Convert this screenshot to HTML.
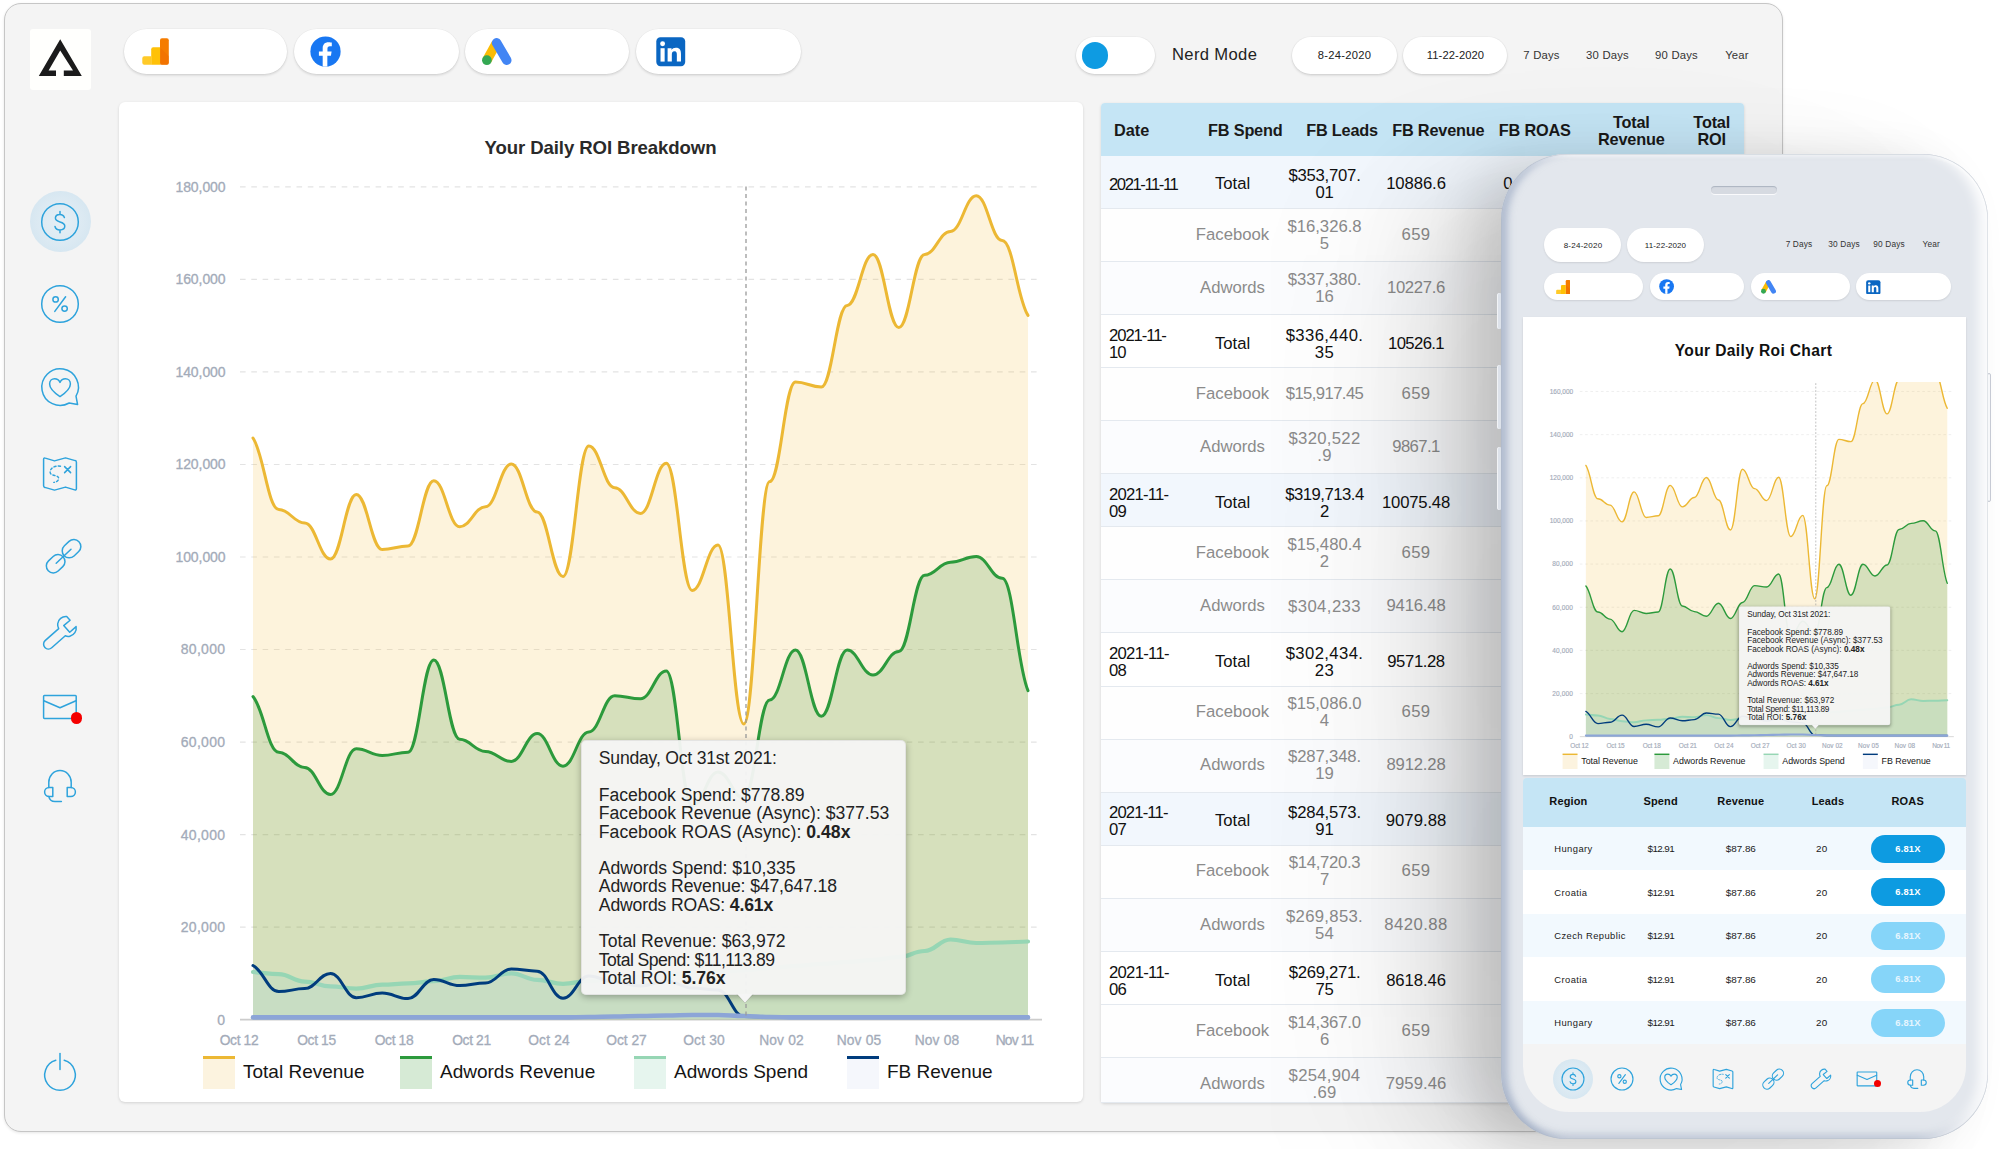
<!DOCTYPE html><html lang="en"><head><meta charset="utf-8"><title>Daily ROI Dashboard</title><style>

html,body{margin:0;padding:0;background:#fff}
body{width:2000px;height:1149px;position:relative;overflow:hidden;font-family:"Liberation Sans", sans-serif;color:#1a1a1a;-webkit-font-smoothing:antialiased}
.t{position:absolute;white-space:nowrap;margin:0;padding:0}
.b{position:absolute;display:block}
.csvg{position:absolute;left:0;top:0;overflow:visible}
b{font-weight:700}
.tip{position:absolute;background:rgba(245,245,245,0.955);border:1px solid rgba(0,0,0,0.07);border-radius:5px;box-shadow:0 2px 7px rgba(0,0,0,0.30);box-sizing:border-box}
.pill{position:absolute;background:#fff;border-radius:30px;box-shadow:0 1.5px 2.5px rgba(0,0,0,0.13),0 0 0 0.6px rgba(0,0,0,0.04)}
.card{position:absolute;background:#fff;border-radius:4px;box-shadow:0 1px 3px rgba(0,0,0,0.14)}
.ico{position:absolute;display:block}

</style></head><body>
<div class="b" style="left:4px;top:3px;width:1777px;height:1127px;background:#f4f4f4;border:1px solid #c6c6c6;border-radius:17px;box-shadow:0 1px 3px rgba(0,0,0,0.10)"></div>
<div class="b" style="left:30.0px;top:29.0px;width:60.5px;height:61.0px;background:#fffffd;border-radius:3px;"></div>
<svg class="b" style="left:30px;top:29px" width="61" height="61" viewBox="0 0 61 61"><path d="M30.2,10.2L51.8,47H33.8V41.4H43L30.2,21.6L18.6,41.4H26V47H8.8Z" fill="#1b1b1b"/></svg>
<div class="pill" style="left:124px;top:28.8px;width:163px;height:45.6px"></div>
<div class="b" style="left:142.2px;top:37.6px"><svg width="27" height="27" viewBox="0 0 27 27"><rect x="18" y="0.2" width="8.8" height="26.6" rx="2" fill="#f57c00"/><path d="M18,9.400L26.800,18.200V24.800a2,2 0 0 1 -2,2H18Z" fill="#ef6c00" opacity="0.55"/><path d="M9.200,26.800V11.200a2,2 0 0 1 2,-2H18.100V26.800Z" fill="#ffc107"/><path d="M0.300,20.200a2,2 0 0 1 2,-2H9.300V26.800H2.300a2,2 0 0 1 -2,-2Z" fill="#ffca28"/></svg></div>
<div class="pill" style="left:294px;top:28.8px;width:165px;height:45.6px"></div>
<div class="b" style="left:309.5px;top:36.0px"><svg width="31" height="31" viewBox="0 0 32 32"><circle cx="16" cy="16" r="15.6" fill="#1877f2"/><path d="M21.6,20.4l0.7,-4.5h-4.3v-2.9c0,-1.2 0.6,-2.4 2.5,-2.4h2v-3.8c0,0 -1.8,-0.3 -3.5,-0.3c-3.6,0 -5.9,2.2 -5.9,6.1v3.4h-3.9v4.5h3.9v10.8c0.8,0.1 1.6,0.2 2.4,0.2s1.600,-0.1 2.4,-0.2v-10.800z" fill="#fff"/></svg></div>
<div class="pill" style="left:465px;top:28.8px;width:164px;height:45.6px"></div>
<div class="b" style="left:482.2px;top:37.5px"><svg width="30" height="30" viewBox="0 0 30 30"><path d="M14.300,5.200L4.900,22.200" stroke="#fbbc04" stroke-width="9.600" stroke-linecap="butt" fill="none"/><path d="M14.600,4.900L24.700,22.200" stroke="#4285f4" stroke-width="9.600" stroke-linecap="round" fill="none"/><circle cx="4.900" cy="22.200" r="4.850" fill="#34a853"/></svg></div>
<div class="pill" style="left:636px;top:28.8px;width:165px;height:45.6px"></div>
<div class="b" style="left:656.0px;top:37.0px"><svg width="29.5" height="29.5" viewBox="0 0 30 30"><rect x="0.3" y="0.3" width="29.4" height="29.4" rx="4.2" fill="#0a66c2"/><rect x="4.6" y="11.4" width="4.2" height="13.6" fill="#fff"/><circle cx="6.7" cy="6.9" r="2.5" fill="#fff"/><path d="M11.8,11.4h4v1.9c0.8,-1.4 2.4,-2.3 4.4,-2.3c4.2,0 5.2,2.7 5.2,6.300v7.700h-4.200v-6.800c0,-1.700 -0.100,-3.700 -2.400,-3.700c-2.300,0 -2.700,1.800 -2.700,3.600v6.900h-4.300z" fill="#fff"/></svg></div>
<div class="pill" style="left:1076px;top:37.2px;width:79px;height:36.4px"></div>
<div class="b" style="left:1082.0px;top:42.2px;width:26.4px;height:26.4px;background:#0e9be2;border-radius:50%;"></div>
<div class="t" style="left:1172.0px;top:44.5px;width:600px;text-align:left;font-size:16.6px;line-height:19.9px;font-weight:400;color:#222;letter-spacing:0.35px;">Nerd Mode</div>
<div class="pill" style="left:1292px;top:37.2px;width:105px;height:36.4px"></div>
<div class="pill" style="left:1403px;top:37.2px;width:104px;height:36.4px"></div>
<div class="t" style="left:1044.5px;top:48.8px;width:600px;text-align:center;font-size:11.2px;line-height:13.4px;font-weight:400;color:#222;letter-spacing:0.30px;">8-24-2020</div>
<div class="t" style="left:1155.5px;top:48.8px;width:600px;text-align:center;font-size:11.2px;line-height:13.4px;font-weight:400;color:#222;letter-spacing:0.10px;">11-22-2020</div>
<div class="t" style="left:1241.5px;top:48.7px;width:600px;text-align:center;font-size:11.3px;line-height:13.6px;font-weight:400;color:#333;letter-spacing:0.20px;">7 Days</div>
<div class="t" style="left:1307.5px;top:48.7px;width:600px;text-align:center;font-size:11.3px;line-height:13.6px;font-weight:400;color:#333;letter-spacing:0.20px;">30 Days</div>
<div class="t" style="left:1376.5px;top:48.7px;width:600px;text-align:center;font-size:11.3px;line-height:13.6px;font-weight:400;color:#333;letter-spacing:0.20px;">90 Days</div>
<div class="t" style="left:1437.0px;top:48.7px;width:600px;text-align:center;font-size:11.3px;line-height:13.6px;font-weight:400;color:#333;letter-spacing:0.20px;">Year</div>
<div class="b" style="left:29.5px;top:191.0px;width:61.0px;height:61.0px;border-radius:50%;background:radial-gradient(circle,#e6eff5 0%,#dbe9f2 55%,#cfe3ef 100%);"></div>
<div class="ico" style="left:40px;top:202.1px"><svg width="40" height="40" viewBox="0 0 40 40" fill="none" stroke="#2ea3dc" stroke-width="1.5" stroke-linecap="round" stroke-linejoin="round" style="overflow:visible"><circle cx="20" cy="20" r="18.3"/><path d="M24.4,15.6c-0.6,-2.1 -2.3,-3.2 -4.5,-3.2c-2.7,0 -4.5,1.5 -4.5,3.7c0,2.3 1.8,3.1 4.6,3.8c3,0.8 4.8,1.8 4.8,4.2c0,2.4 -2,3.9 -4.8,3.9c-2.7,0 -4.5,-1.3 -5,-3.5M20,9.6v2.8M20,28v2.8"/></svg></div>
<div class="ico" style="left:40px;top:284.2px"><svg width="40" height="40" viewBox="0 0 40 40" fill="none" stroke="#2ea3dc" stroke-width="1.5" stroke-linecap="round" stroke-linejoin="round" style="overflow:visible"><circle cx="20" cy="20" r="18.3"/><circle cx="15.6" cy="15.4" r="2.7"/><circle cx="24.6" cy="24.6" r="2.7"/><path d="M25.6,12.8L14.8,27.4"/></svg></div>
<div class="ico" style="left:40px;top:366.5px"><svg width="40" height="40" viewBox="0 0 40 40" fill="none" stroke="#2ea3dc" stroke-width="1.5" stroke-linecap="round" stroke-linejoin="round" style="overflow:visible"><path d="M36,29.2L37.6,37.6L29.2,36A18.3,18.3 0 1 1 36,29.2Z"/><path d="M20,29.6C12.5,24.6 9.6,20.6 9.6,17C9.6,13.6 12,11.8 14.6,11.8C17,11.8 19,13.2 20,15.4C21,13.2 23,11.8 25.4,11.8C28,11.8 30.4,13.6 30.4,17C30.4,20.6 27.5,24.6 20,29.6Z"/></svg></div>
<div class="ico" style="left:40px;top:453.5px"><svg width="40" height="40" viewBox="0 0 40 40" fill="none" stroke="#2ea3dc" stroke-width="1.5" stroke-linecap="round" stroke-linejoin="round" style="overflow:visible"><path d="M3.6,5.2C3.6,4.2 4.4,3.8 5.3,4.1L14.5,6.9L25.5,3.9L35.2,6.6C36,6.8 36.4,7.4 36.4,8.2V34.8C36.4,35.8 35.6,36.2 34.7,35.9L25.5,33.1L14.5,36.1L4.8,33.4C4,33.2 3.6,32.6 3.6,31.8Z"/><path d="M20.5,12.2C14.5,11.2 9.5,14.6 10.2,18.6C11,22.6 19.5,20.5 18.6,25C18.2,27 16,28.2 13.8,28.4" stroke-dasharray="2.2 2.2" stroke-width="1.4"/><path d="M24.6,12.6L30.6,18.6M30.6,12.6L24.6,18.6"/></svg></div>
<div class="ico" style="left:40px;top:536.2px"><svg width="40" height="40" viewBox="0 0 40 40" fill="none" stroke="#2ea3dc" stroke-width="1.5" stroke-linecap="round" stroke-linejoin="round" style="overflow:visible"><g transform="translate(3.6,0.2) rotate(-43.5 20 20)"><rect x="-1.15" y="13" width="20.4" height="14" rx="7"/><rect x="20.75" y="13" width="20.4" height="14" rx="7"/><path d="M9.800,20H30.200"/></g></svg></div>
<div class="ico" style="left:40px;top:613.2px"><svg width="40" height="40" viewBox="0 0 40 40" fill="none" stroke="#2ea3dc" stroke-width="1.5" stroke-linecap="round" stroke-linejoin="round" style="overflow:visible"><path d="M26.2,3.6C21.6,3.2 17.6,6.4 17.2,10.8C17,12.6 17.4,14.2 18.2,15.6L4.6,27.6C2.6,29.4 2.6,32.4 4.4,34.4C6.2,36.4 9.2,36.6 11.2,34.8L24.8,22.8C26.2,23.4 27.8,23.6 29.4,23.2C33.6,22.2 36.4,18 35.6,13.6L29.2,19.2L23.2,12.6L29.6,7.2Z" transform="translate(0.5,0)"/></svg></div>
<div class="ico" style="left:40px;top:687.0px"><svg width="40" height="40" viewBox="0 0 40 40" fill="none" stroke="#2ea3dc" stroke-width="1.5" stroke-linecap="round" stroke-linejoin="round" style="overflow:visible"><rect x="3.6" y="8.4" width="32.6" height="23" rx="0.8"/><path d="M3.8,13.8L20,20.8L36,13.8"/></svg></div>
<div class="ico" style="left:40px;top:766.0px"><svg width="40" height="40" viewBox="0 0 40 40" fill="none" stroke="#2ea3dc" stroke-width="1.5" stroke-linecap="round" stroke-linejoin="round" style="overflow:visible"><path d="M8.8,21.6V16.2C8.8,9.800 13.700,4.600 20,4.600C26.300,4.600 31.200,9.800 31.200,16.200V21.600"/><path d="M12.8,21.6V30.4H9.2C6.6,30.4 4.6,28.4 4.6,26C4.6,23.6 6.6,21.6 9.2,21.6Z"/><path d="M27.2,21.6V30.4H30.8C33.4,30.4 35.4,28.4 35.4,26C35.4,23.6 33.4,21.6 30.8,21.6Z"/><path d="M8.8,30.4C9.4,33.6 11.8,35.6 15,35.6H21.4"/></svg></div>
<div class="b" style="left:71.2px;top:712.4px;width:11.2px;height:11.2px;background:#f40000;border-radius:50%;"></div>
<div class="ico" style="left:40px;top:1055.3px"><svg width="40" height="40" viewBox="0 0 40 40" fill="none" stroke="#2ea3dc" stroke-width="1.5" stroke-linecap="round" stroke-linejoin="round" style="overflow:visible"><path d="M24.2,5.3A15.3,15.3 0 1 1 15.8,5.3"/><path d="M20,-1.5V14.5"/></svg></div>
<div class="card" style="left:119px;top:102px;width:964px;height:999.7px;border-radius:6px"></div>
<div class="t" style="left:300.5px;top:137.2px;width:600px;text-align:center;font-size:18.6px;line-height:22.3px;font-weight:700;color:#2a2a2a;letter-spacing:-0.10px;">Your Daily ROI Breakdown</div>
<svg class="csvg" width="1100" height="1110" viewBox="0 0 1100 1110"><line x1="240" x2="1042" y1="927.2" y2="927.2" stroke="#e3e3e3" stroke-width="1.2" stroke-dasharray="5.6 5.7"/><line x1="240" x2="1042" y1="834.6" y2="834.6" stroke="#e3e3e3" stroke-width="1.2" stroke-dasharray="5.6 5.7"/><line x1="240" x2="1042" y1="742.1" y2="742.1" stroke="#e3e3e3" stroke-width="1.2" stroke-dasharray="5.6 5.7"/><line x1="240" x2="1042" y1="649.5" y2="649.5" stroke="#e3e3e3" stroke-width="1.2" stroke-dasharray="5.6 5.7"/><line x1="240" x2="1042" y1="557.0" y2="557.0" stroke="#e3e3e3" stroke-width="1.2" stroke-dasharray="5.6 5.7"/><line x1="240" x2="1042" y1="464.5" y2="464.5" stroke="#e3e3e3" stroke-width="1.2" stroke-dasharray="5.6 5.7"/><line x1="240" x2="1042" y1="371.9" y2="371.9" stroke="#e3e3e3" stroke-width="1.2" stroke-dasharray="5.6 5.7"/><line x1="240" x2="1042" y1="279.4" y2="279.4" stroke="#e3e3e3" stroke-width="1.2" stroke-dasharray="5.6 5.7"/><line x1="240" x2="1042" y1="186.8" y2="186.8" stroke="#e3e3e3" stroke-width="1.2" stroke-dasharray="5.6 5.7"/><line x1="240" x2="1042" y1="1019.6" y2="1019.6" stroke="#cccccc" stroke-width="1.6"/><path d="M253.0,438.0C263.8,453.7 268.0,509.5 278.8,509.5C289.7,509.5 293.8,523.0 304.7,523.0C315.5,523.0 319.7,559.0 330.5,559.0C341.3,559.0 345.5,494.6 356.3,494.6C367.2,494.6 371.3,549.5 382.2,549.5C393.0,549.5 397.1,546.0 408.0,546.0C418.8,546.0 423.0,480.7 433.8,480.7C444.7,480.7 448.8,526.8 459.7,526.8C470.5,526.8 474.6,506.8 485.5,506.8C496.3,506.8 500.5,464.0 511.3,464.0C522.2,464.0 526.3,512.0 537.2,512.0C548.0,512.0 552.1,576.5 563.0,576.5C573.9,576.5 578.0,446.0 588.8,446.0C599.7,446.0 603.8,487.7 614.7,487.7C625.5,487.7 629.6,513.4 640.5,513.4C651.4,513.4 655.5,463.3 666.3,463.3C677.2,463.3 681.3,590.4 692.2,590.4C703.0,590.4 707.1,545.0 718.0,545.0C728.9,545.0 733.0,724.0 743.8,724.0C754.7,724.0 758.8,481.6 769.7,481.6C780.5,481.6 784.6,382.0 795.5,382.0C806.4,382.0 810.5,387.0 821.3,387.0C832.2,387.0 836.3,305.4 847.2,305.4C858.0,305.4 862.1,254.4 873.0,254.4C883.9,254.4 888.0,327.5 898.8,327.5C909.7,327.5 913.8,254.4 924.7,254.4C935.5,254.4 939.6,231.4 950.5,231.4C961.4,231.4 965.5,195.7 976.3,195.7C987.2,195.7 991.3,240.5 1002.2,240.5C1013.0,240.5 1017.1,298.9 1028.0,315.4L1028.0,1019.5L253.0,1019.5Z" fill="rgba(245,196,80,0.20)" stroke="none"/><path d="M253.0,438.0C263.8,453.7 268.0,509.5 278.8,509.5C289.7,509.5 293.8,523.0 304.7,523.0C315.5,523.0 319.7,559.0 330.5,559.0C341.3,559.0 345.5,494.6 356.3,494.6C367.2,494.6 371.3,549.5 382.2,549.5C393.0,549.5 397.1,546.0 408.0,546.0C418.8,546.0 423.0,480.7 433.8,480.7C444.7,480.7 448.8,526.8 459.7,526.8C470.5,526.8 474.6,506.8 485.5,506.8C496.3,506.8 500.5,464.0 511.3,464.0C522.2,464.0 526.3,512.0 537.2,512.0C548.0,512.0 552.1,576.5 563.0,576.5C573.9,576.5 578.0,446.0 588.8,446.0C599.7,446.0 603.8,487.7 614.7,487.7C625.5,487.7 629.6,513.4 640.5,513.4C651.4,513.4 655.5,463.3 666.3,463.3C677.2,463.3 681.3,590.4 692.2,590.4C703.0,590.4 707.1,545.0 718.0,545.0C728.9,545.0 733.0,724.0 743.8,724.0C754.7,724.0 758.8,481.6 769.7,481.6C780.5,481.6 784.6,382.0 795.5,382.0C806.4,382.0 810.5,387.0 821.3,387.0C832.2,387.0 836.3,305.4 847.2,305.4C858.0,305.4 862.1,254.4 873.0,254.4C883.9,254.4 888.0,327.5 898.8,327.5C909.7,327.5 913.8,254.4 924.7,254.4C935.5,254.4 939.6,231.4 950.5,231.4C961.4,231.4 965.5,195.7 976.3,195.7C987.2,195.7 991.3,240.5 1002.2,240.5C1013.0,240.5 1017.1,298.9 1028.0,315.4" fill="none" stroke="#ecb834" stroke-width="3" stroke-linejoin="round" stroke-linecap="round"/><path d="M253.0,696.6C263.8,708.9 268.0,752.3 278.8,752.3C289.7,752.3 293.8,767.5 304.7,767.5C315.5,767.5 319.7,794.5 330.5,794.5C341.3,794.5 345.5,748.8 356.3,748.8C367.2,748.8 371.3,755.4 382.2,755.4C393.0,755.4 397.1,752.3 408.0,752.3C418.8,752.3 423.0,660.0 433.8,660.0C444.7,660.0 448.8,739.3 459.7,739.3C470.5,739.3 474.6,751.4 485.5,751.4C496.3,751.4 500.5,761.4 511.3,761.4C522.2,761.4 526.3,733.6 537.2,733.6C548.0,733.6 552.1,766.2 563.0,766.2C573.9,766.2 578.0,731.9 588.8,731.9C599.7,731.9 603.8,695.7 614.7,695.7C625.5,695.7 629.6,698.8 640.5,698.8C651.4,698.8 655.5,670.9 666.3,670.9C677.2,670.9 681.3,806.0 692.2,806.0C703.0,806.0 707.1,772.0 718.0,772.0C728.9,772.0 733.0,798.0 743.8,798.0C754.7,798.0 758.8,700.0 769.7,700.0C780.5,700.0 784.6,650.0 795.5,650.0C806.4,650.0 810.5,716.3 821.3,716.3C832.2,716.3 836.3,650.0 847.2,650.0C858.0,650.0 862.1,675.0 873.0,675.0C883.9,675.0 888.0,651.4 898.8,651.4C909.7,651.4 913.8,575.3 924.7,575.3C935.5,575.3 939.6,562.2 950.5,562.2C961.4,562.2 965.5,556.6 976.3,556.6C987.2,556.6 991.3,578.3 1002.2,578.3C1013.0,578.3 1017.1,665.9 1028.0,690.6L1028.0,1019.5L253.0,1019.5Z" fill="rgba(60,150,60,0.20)" stroke="none"/><path d="M253.0,696.6C263.8,708.9 268.0,752.3 278.8,752.3C289.7,752.3 293.8,767.5 304.7,767.5C315.5,767.5 319.7,794.5 330.5,794.5C341.3,794.5 345.5,748.8 356.3,748.8C367.2,748.8 371.3,755.4 382.2,755.4C393.0,755.4 397.1,752.3 408.0,752.3C418.8,752.3 423.0,660.0 433.8,660.0C444.7,660.0 448.8,739.3 459.7,739.3C470.5,739.3 474.6,751.4 485.5,751.4C496.3,751.4 500.5,761.4 511.3,761.4C522.2,761.4 526.3,733.6 537.2,733.6C548.0,733.6 552.1,766.2 563.0,766.2C573.9,766.2 578.0,731.9 588.8,731.9C599.7,731.9 603.8,695.7 614.7,695.7C625.5,695.7 629.6,698.8 640.5,698.8C651.4,698.8 655.5,670.9 666.3,670.9C677.2,670.9 681.3,806.0 692.2,806.0C703.0,806.0 707.1,772.0 718.0,772.0C728.9,772.0 733.0,798.0 743.8,798.0C754.7,798.0 758.8,700.0 769.7,700.0C780.5,700.0 784.6,650.0 795.5,650.0C806.4,650.0 810.5,716.3 821.3,716.3C832.2,716.3 836.3,650.0 847.2,650.0C858.0,650.0 862.1,675.0 873.0,675.0C883.9,675.0 888.0,651.4 898.8,651.4C909.7,651.4 913.8,575.3 924.7,575.3C935.5,575.3 939.6,562.2 950.5,562.2C961.4,562.2 965.5,556.6 976.3,556.6C987.2,556.6 991.3,578.3 1002.2,578.3C1013.0,578.3 1017.1,665.9 1028.0,690.6" fill="none" stroke="#2c9a3c" stroke-width="3" stroke-linejoin="round" stroke-linecap="round"/><path d="M253.0,972.0C263.8,972.5 268.0,974.2 278.8,974.2C289.7,974.2 293.8,981.6 304.7,981.6C315.5,981.6 319.7,986.4 330.5,986.4C341.3,986.4 345.5,988.6 356.3,988.6C367.2,988.6 371.3,984.7 382.2,984.7C393.0,984.7 397.1,983.4 408.0,983.4C418.8,983.4 423.0,981.2 433.8,981.2C444.7,981.2 448.8,976.9 459.7,976.9C470.5,976.9 474.6,977.7 485.5,977.7C496.3,977.7 500.5,973.4 511.3,973.4C522.2,973.4 526.3,979.9 537.2,979.9C548.0,979.9 552.1,983.8 563.0,983.8C573.9,983.8 578.0,981.0 588.8,981.0C599.7,981.0 603.8,979.0 614.7,979.0C625.5,979.0 629.6,977.0 640.5,977.0C651.4,977.0 655.5,975.0 666.3,975.0C677.2,975.0 681.3,973.0 692.2,973.0C703.0,973.0 707.1,971.5 718.0,971.5C728.9,971.5 733.0,970.2 743.8,970.2C754.7,970.2 758.8,968.0 769.7,968.0C780.5,968.0 784.6,966.0 795.5,966.0C806.4,966.0 810.5,964.0 821.3,964.0C832.2,964.0 836.3,962.0 847.2,962.0C858.0,962.0 862.1,960.0 873.0,960.0C883.9,960.0 888.0,957.0 898.8,957.0C909.7,957.0 913.8,951.0 924.7,951.0C935.5,951.0 939.6,939.5 950.5,939.5C961.4,939.5 965.5,943.0 976.3,943.0C987.2,943.0 991.3,942.5 1002.2,942.5C1013.0,942.5 1017.1,941.7 1028.0,941.5L1028.0,1019.5L253.0,1019.5Z" fill="rgba(150,215,200,0.20)" stroke="none"/><path d="M253.0,972.0C263.8,972.5 268.0,974.2 278.8,974.2C289.7,974.2 293.8,981.6 304.7,981.6C315.5,981.6 319.7,986.4 330.5,986.4C341.3,986.4 345.5,988.6 356.3,988.6C367.2,988.6 371.3,984.7 382.2,984.7C393.0,984.7 397.1,983.4 408.0,983.4C418.8,983.4 423.0,981.2 433.8,981.2C444.7,981.2 448.8,976.9 459.7,976.9C470.5,976.9 474.6,977.7 485.5,977.7C496.3,977.7 500.5,973.4 511.3,973.4C522.2,973.4 526.3,979.9 537.2,979.9C548.0,979.9 552.1,983.8 563.0,983.8C573.9,983.8 578.0,981.0 588.8,981.0C599.7,981.0 603.8,979.0 614.7,979.0C625.5,979.0 629.6,977.0 640.5,977.0C651.4,977.0 655.5,975.0 666.3,975.0C677.2,975.0 681.3,973.0 692.2,973.0C703.0,973.0 707.1,971.5 718.0,971.5C728.9,971.5 733.0,970.2 743.8,970.2C754.7,970.2 758.8,968.0 769.7,968.0C780.5,968.0 784.6,966.0 795.5,966.0C806.4,966.0 810.5,964.0 821.3,964.0C832.2,964.0 836.3,962.0 847.2,962.0C858.0,962.0 862.1,960.0 873.0,960.0C883.9,960.0 888.0,957.0 898.8,957.0C909.7,957.0 913.8,951.0 924.7,951.0C935.5,951.0 939.6,939.5 950.5,939.5C961.4,939.5 965.5,943.0 976.3,943.0C987.2,943.0 991.3,942.5 1002.2,942.5C1013.0,942.5 1017.1,941.7 1028.0,941.5" fill="none" stroke="#96d6b4" stroke-width="4.2" stroke-linejoin="round" stroke-linecap="round"/><path d="M253.0,965.5C263.8,971.2 268.0,991.6 278.8,991.6C289.7,991.6 293.8,988.6 304.7,988.6C315.5,988.6 319.7,973.4 330.5,973.4C341.3,973.4 345.5,997.7 356.3,997.7C367.2,997.7 371.3,993.0 382.2,993.0C393.0,993.0 397.1,998.6 408.0,998.6C418.8,998.6 423.0,979.5 433.8,979.5C444.7,979.5 448.8,985.6 459.7,985.6C470.5,985.6 474.6,983.0 485.5,983.0C496.3,983.0 500.5,969.0 511.3,969.0C522.2,969.0 526.3,971.2 537.2,971.2C548.0,971.2 552.1,998.2 563.0,998.2C573.9,998.2 578.0,976.0 588.8,976.0C599.7,976.0 603.8,982.0 614.7,982.0C625.5,982.0 629.6,986.0 640.5,986.0C651.4,986.0 655.5,981.0 666.3,981.0C677.2,981.0 681.3,988.0 692.2,988.0C703.0,988.0 707.1,990.0 718.0,990.0C728.9,990.0 733.0,1016.5 743.8,1016.5C754.7,1016.5 758.8,1017.0 769.7,1017.0C780.5,1017.0 784.6,1017.0 795.5,1017.0C806.4,1017.0 810.5,1017.0 821.3,1017.0C832.2,1017.0 836.3,1017.0 847.2,1017.0C858.0,1017.0 862.1,1017.0 873.0,1017.0C883.9,1017.0 888.0,1017.0 898.8,1017.0C909.7,1017.0 913.8,1017.0 924.7,1017.0C935.5,1017.0 939.6,1017.0 950.5,1017.0C961.4,1017.0 965.5,1017.0 976.3,1017.0C987.2,1017.0 991.3,1017.0 1002.2,1017.0C1013.0,1017.0 1017.1,1017.0 1028.0,1017.0L1028.0,1019.5L253.0,1019.5Z" fill="rgba(200,215,245,0.10)" stroke="none"/><path d="M253.0,965.5C263.8,971.2 268.0,991.6 278.8,991.6C289.7,991.6 293.8,988.6 304.7,988.6C315.5,988.6 319.7,973.4 330.5,973.4C341.3,973.4 345.5,997.7 356.3,997.7C367.2,997.7 371.3,993.0 382.2,993.0C393.0,993.0 397.1,998.6 408.0,998.6C418.8,998.6 423.0,979.5 433.8,979.5C444.7,979.5 448.8,985.6 459.7,985.6C470.5,985.6 474.6,983.0 485.5,983.0C496.3,983.0 500.5,969.0 511.3,969.0C522.2,969.0 526.3,971.2 537.2,971.2C548.0,971.2 552.1,998.2 563.0,998.2C573.9,998.2 578.0,976.0 588.8,976.0C599.7,976.0 603.8,982.0 614.7,982.0C625.5,982.0 629.6,986.0 640.5,986.0C651.4,986.0 655.5,981.0 666.3,981.0C677.2,981.0 681.3,988.0 692.2,988.0C703.0,988.0 707.1,990.0 718.0,990.0C728.9,990.0 733.0,1016.5 743.8,1016.5C754.7,1016.5 758.8,1017.0 769.7,1017.0C780.5,1017.0 784.6,1017.0 795.5,1017.0C806.4,1017.0 810.5,1017.0 821.3,1017.0C832.2,1017.0 836.3,1017.0 847.2,1017.0C858.0,1017.0 862.1,1017.0 873.0,1017.0C883.9,1017.0 888.0,1017.0 898.8,1017.0C909.7,1017.0 913.8,1017.0 924.7,1017.0C935.5,1017.0 939.6,1017.0 950.5,1017.0C961.4,1017.0 965.5,1017.0 976.3,1017.0C987.2,1017.0 991.3,1017.0 1002.2,1017.0C1013.0,1017.0 1017.1,1017.0 1028.0,1017.0" fill="none" stroke="#003c7d" stroke-width="3" stroke-linejoin="round" stroke-linecap="round"/><path d="M253.0,1017.4C263.8,1017.4 268.0,1017.4 278.8,1017.4C289.7,1017.4 293.8,1017.4 304.7,1017.4C315.5,1017.4 319.7,1017.4 330.5,1017.4C341.3,1017.4 345.5,1017.4 356.3,1017.4C367.2,1017.4 371.3,1017.4 382.2,1017.4C393.0,1017.4 397.1,1017.4 408.0,1017.4C418.8,1017.4 423.0,1017.4 433.8,1017.4C444.7,1017.4 448.8,1017.4 459.7,1017.4C470.5,1017.4 474.6,1017.4 485.5,1017.4C496.3,1017.4 500.5,1017.4 511.3,1017.4C522.2,1017.4 526.3,1017.4 537.2,1017.4C548.0,1017.4 552.1,1017.4 563.0,1017.4C573.9,1017.4 578.0,1017.0 588.8,1017.0C599.7,1017.0 603.8,1016.5 614.7,1016.5C625.5,1016.5 629.6,1016.0 640.5,1016.0C651.4,1016.0 655.5,1015.5 666.3,1015.5C677.2,1015.5 681.3,1015.0 692.2,1015.0C703.0,1015.0 707.1,1015.0 718.0,1015.0C728.9,1015.0 733.0,1016.0 743.8,1016.0C754.7,1016.0 758.8,1017.0 769.7,1017.0C780.5,1017.0 784.6,1017.4 795.5,1017.4C806.4,1017.4 810.5,1017.4 821.3,1017.4C832.2,1017.4 836.3,1017.4 847.2,1017.4C858.0,1017.4 862.1,1017.4 873.0,1017.4C883.9,1017.4 888.0,1017.4 898.8,1017.4C909.7,1017.4 913.8,1017.4 924.7,1017.4C935.5,1017.4 939.6,1017.4 950.5,1017.4C961.4,1017.4 965.5,1017.4 976.3,1017.4C987.2,1017.4 991.3,1017.4 1002.2,1017.4C1013.0,1017.4 1017.1,1017.4 1028.0,1017.4L1028.0,1019.5L253.0,1019.5Z" fill="rgba(120,140,220,0.0)" stroke="none"/><path d="M253.0,1017.4C263.8,1017.4 268.0,1017.4 278.8,1017.4C289.7,1017.4 293.8,1017.4 304.7,1017.4C315.5,1017.4 319.7,1017.4 330.5,1017.4C341.3,1017.4 345.5,1017.4 356.3,1017.4C367.2,1017.4 371.3,1017.4 382.2,1017.4C393.0,1017.4 397.1,1017.4 408.0,1017.4C418.8,1017.4 423.0,1017.4 433.8,1017.4C444.7,1017.4 448.8,1017.4 459.7,1017.4C470.5,1017.4 474.6,1017.4 485.5,1017.4C496.3,1017.4 500.5,1017.4 511.3,1017.4C522.2,1017.4 526.3,1017.4 537.2,1017.4C548.0,1017.4 552.1,1017.4 563.0,1017.4C573.9,1017.4 578.0,1017.0 588.8,1017.0C599.7,1017.0 603.8,1016.5 614.7,1016.5C625.5,1016.5 629.6,1016.0 640.5,1016.0C651.4,1016.0 655.5,1015.5 666.3,1015.5C677.2,1015.5 681.3,1015.0 692.2,1015.0C703.0,1015.0 707.1,1015.0 718.0,1015.0C728.9,1015.0 733.0,1016.0 743.8,1016.0C754.7,1016.0 758.8,1017.0 769.7,1017.0C780.5,1017.0 784.6,1017.4 795.5,1017.4C806.4,1017.4 810.5,1017.4 821.3,1017.4C832.2,1017.4 836.3,1017.4 847.2,1017.4C858.0,1017.4 862.1,1017.4 873.0,1017.4C883.9,1017.4 888.0,1017.4 898.8,1017.4C909.7,1017.4 913.8,1017.4 924.7,1017.4C935.5,1017.4 939.6,1017.4 950.5,1017.4C961.4,1017.4 965.5,1017.4 976.3,1017.4C987.2,1017.4 991.3,1017.4 1002.2,1017.4C1013.0,1017.4 1017.1,1017.4 1028.0,1017.4" fill="none" stroke="#8ca5d7" stroke-width="4.6" stroke-linejoin="round" stroke-linecap="round"/><line x1="746" x2="746" y1="186.5" y2="1019" stroke="#9a9a9a" stroke-width="1.3" stroke-dasharray="4 3.5"/></svg><div class="t" style="left:-374.5px;top:1011.6px;width:600px;text-align:right;font-size:14px;line-height:16.8px;font-weight:400;color:#a3abb9;letter-spacing:0.50px;-webkit-text-stroke:0.3px #a3abb9;">0</div><div class="t" style="left:-374.5px;top:919.1px;width:600px;text-align:right;font-size:14px;line-height:16.8px;font-weight:400;color:#a3abb9;letter-spacing:0.34px;-webkit-text-stroke:0.3px #a3abb9;">20,000</div><div class="t" style="left:-374.5px;top:826.5px;width:600px;text-align:right;font-size:14px;line-height:16.8px;font-weight:400;color:#a3abb9;letter-spacing:0.34px;-webkit-text-stroke:0.3px #a3abb9;">40,000</div><div class="t" style="left:-374.5px;top:734.0px;width:600px;text-align:right;font-size:14px;line-height:16.8px;font-weight:400;color:#a3abb9;letter-spacing:0.34px;-webkit-text-stroke:0.3px #a3abb9;">60,000</div><div class="t" style="left:-374.5px;top:641.4px;width:600px;text-align:right;font-size:14px;line-height:16.8px;font-weight:400;color:#a3abb9;letter-spacing:0.34px;-webkit-text-stroke:0.3px #a3abb9;">80,000</div><div class="t" style="left:-374.5px;top:548.9px;width:600px;text-align:right;font-size:14px;line-height:16.8px;font-weight:400;color:#a3abb9;letter-spacing:-0.08px;-webkit-text-stroke:0.3px #a3abb9;">100,000</div><div class="t" style="left:-374.5px;top:456.4px;width:600px;text-align:right;font-size:14px;line-height:16.8px;font-weight:400;color:#a3abb9;letter-spacing:-0.08px;-webkit-text-stroke:0.3px #a3abb9;">120,000</div><div class="t" style="left:-374.5px;top:363.8px;width:600px;text-align:right;font-size:14px;line-height:16.8px;font-weight:400;color:#a3abb9;letter-spacing:-0.08px;-webkit-text-stroke:0.3px #a3abb9;">140,000</div><div class="t" style="left:-374.5px;top:271.3px;width:600px;text-align:right;font-size:14px;line-height:16.8px;font-weight:400;color:#a3abb9;letter-spacing:-0.08px;-webkit-text-stroke:0.3px #a3abb9;">160,000</div><div class="t" style="left:-374.5px;top:178.7px;width:600px;text-align:right;font-size:14px;line-height:16.8px;font-weight:400;color:#a3abb9;letter-spacing:-0.08px;-webkit-text-stroke:0.3px #a3abb9;">180,000</div><div class="t" style="left:-61.0px;top:1032.8px;width:600px;text-align:center;font-size:13.8px;line-height:16.6px;font-weight:400;color:#a3abb9;letter-spacing:-0.34px;-webkit-text-stroke:0.3px #a3abb9;">Oct 12</div><div class="t" style="left:16.5px;top:1032.8px;width:600px;text-align:center;font-size:13.8px;line-height:16.6px;font-weight:400;color:#a3abb9;letter-spacing:-0.34px;-webkit-text-stroke:0.3px #a3abb9;">Oct 15</div><div class="t" style="left:94.0px;top:1032.8px;width:600px;text-align:center;font-size:13.8px;line-height:16.6px;font-weight:400;color:#a3abb9;letter-spacing:-0.34px;-webkit-text-stroke:0.3px #a3abb9;">Oct 18</div><div class="t" style="left:171.5px;top:1032.8px;width:600px;text-align:center;font-size:13.8px;line-height:16.6px;font-weight:400;color:#a3abb9;letter-spacing:-0.34px;-webkit-text-stroke:0.3px #a3abb9;">Oct 21</div><div class="t" style="left:249.0px;top:1032.8px;width:600px;text-align:center;font-size:13.8px;line-height:16.6px;font-weight:400;color:#a3abb9;letter-spacing:0.17px;-webkit-text-stroke:0.3px #a3abb9;">Oct 24</div><div class="t" style="left:326.5px;top:1032.8px;width:600px;text-align:center;font-size:13.8px;line-height:16.6px;font-weight:400;color:#a3abb9;letter-spacing:-0.05px;-webkit-text-stroke:0.3px #a3abb9;">Oct 27</div><div class="t" style="left:404.0px;top:1032.8px;width:600px;text-align:center;font-size:13.8px;line-height:16.6px;font-weight:400;color:#a3abb9;letter-spacing:0.17px;-webkit-text-stroke:0.3px #a3abb9;">Oct 30</div><div class="t" style="left:481.5px;top:1032.8px;width:600px;text-align:center;font-size:13.8px;line-height:16.6px;font-weight:400;color:#a3abb9;letter-spacing:0.17px;-webkit-text-stroke:0.3px #a3abb9;">Nov 02</div><div class="t" style="left:559.0px;top:1032.8px;width:600px;text-align:center;font-size:13.8px;line-height:16.6px;font-weight:400;color:#a3abb9;letter-spacing:0.17px;-webkit-text-stroke:0.3px #a3abb9;">Nov 05</div><div class="t" style="left:637.0px;top:1032.8px;width:600px;text-align:center;font-size:13.8px;line-height:16.6px;font-weight:400;color:#a3abb9;letter-spacing:0.17px;-webkit-text-stroke:0.3px #a3abb9;">Nov 08</div><div class="t" style="left:714.5px;top:1032.8px;width:600px;text-align:center;font-size:13.8px;line-height:16.6px;font-weight:400;color:#a3abb9;letter-spacing:-0.86px;-webkit-text-stroke:0.3px #a3abb9;">Nov 11</div><div class="b" style="left:203.0px;top:1055.6px;width:32.0px;height:33.8px;background:#fcf3df;border-top:3px solid #ecb834;box-sizing:border-box;"></div><div class="t" style="left:243.0px;top:1061.1px;width:600px;text-align:left;font-size:19px;line-height:22.8px;font-weight:400;color:#151515;">Total Revenue</div><div class="b" style="left:400.0px;top:1055.6px;width:32.0px;height:33.8px;background:#d6ead5;border-top:3px solid #2c9a3c;box-sizing:border-box;"></div><div class="t" style="left:440.0px;top:1061.1px;width:600px;text-align:left;font-size:19px;line-height:22.8px;font-weight:400;color:#151515;">Adwords Revenue</div><div class="b" style="left:634.0px;top:1055.6px;width:32.0px;height:33.8px;background:#e6f5ee;border-top:3px solid #96d6b4;box-sizing:border-box;"></div><div class="t" style="left:674.0px;top:1061.1px;width:600px;text-align:left;font-size:19px;line-height:22.8px;font-weight:400;color:#151515;">Adwords Spend</div><div class="b" style="left:847.0px;top:1055.6px;width:32.0px;height:33.8px;background:#f5f7fc;border-top:3px solid #003c7d;box-sizing:border-box;"></div><div class="t" style="left:887.0px;top:1061.1px;width:600px;text-align:left;font-size:19px;line-height:22.8px;font-weight:400;color:#151515;">FB Revenue</div><div class="tip" style="left:580.5px;top:739.5px;width:325.5px;height:255px;"></div><svg class="b" style="left:734px;top:994.2px" width="22" height="11" viewBox="0 0 22 11"><path d="M3,0L11,9L19,0Z" fill="#f5f5f5"/><path d="M3,0.3L11,9L19,0.3" fill="none" stroke="rgba(0,0,0,0.12)" stroke-width="1"/></svg><div class="t" style="left:598.8px;top:748.0px;width:600px;text-align:left;font-size:17.6px;line-height:21.1px;font-weight:400;color:#222;letter-spacing:-0.21px;">Sunday, Oct 31st 2021:</div><div class="t" style="left:598.8px;top:784.7px;width:600px;text-align:left;font-size:17.6px;line-height:21.1px;font-weight:400;color:#222;letter-spacing:-0.03px;">Facebook Spend: $778.89</div><div class="t" style="left:598.8px;top:803.1px;width:600px;text-align:left;font-size:17.6px;line-height:21.1px;font-weight:400;color:#222;">Facebook Revenue (Async): $377.53</div><div class="t" style="left:598.8px;top:821.5px;width:600px;text-align:left;font-size:17.6px;line-height:21.1px;font-weight:400;color:#222;letter-spacing:0.05px;">Facebook ROAS (Async): <b>0.48x</b></div><div class="t" style="left:598.8px;top:857.9px;width:600px;text-align:left;font-size:17.6px;line-height:21.1px;font-weight:400;color:#222;letter-spacing:-0.04px;">Adwords Spend: $10,335</div><div class="t" style="left:598.8px;top:876.2px;width:600px;text-align:left;font-size:17.6px;line-height:21.1px;font-weight:400;color:#222;letter-spacing:-0.13px;">Adwords Revenue: $47,647.18</div><div class="t" style="left:598.8px;top:894.6px;width:600px;text-align:left;font-size:17.6px;line-height:21.1px;font-weight:400;color:#222;letter-spacing:-0.14px;">Adwords ROAS: <b>4.61x</b></div><div class="t" style="left:598.8px;top:931.2px;width:600px;text-align:left;font-size:17.6px;line-height:21.1px;font-weight:400;color:#222;letter-spacing:0.04px;">Total Revenue: $63,972</div><div class="t" style="left:598.8px;top:949.7px;width:600px;text-align:left;font-size:17.6px;line-height:21.1px;font-weight:400;color:#222;letter-spacing:-0.54px;">Total Spend: $11,113.89</div><div class="t" style="left:598.8px;top:968.0px;width:600px;text-align:left;font-size:17.6px;line-height:21.1px;font-weight:400;color:#222;letter-spacing:-0.02px;">Total ROI: <b>5.76x</b></div>
<div class="card" style="left:1101px;top:102.6px;width:642.5px;height:1000.2px;overflow:hidden" id="tbl">
</div>
<div class="b" style="left:1101.0px;top:102.6px;width:642.5px;height:53.2px;background:#c5e5f5;border-radius:4px 4px 0 0;"></div>
<div class="t" style="left:1114.0px;top:121.2px;width:600px;text-align:left;font-size:16.3px;line-height:19.6px;font-weight:700;color:#1a1a1a;">Date</div>
<div class="t" style="left:945.3px;top:121.2px;width:600px;text-align:center;font-size:16.3px;line-height:19.6px;font-weight:700;color:#1a1a1a;letter-spacing:-0.20px;">FB Spend</div>
<div class="t" style="left:1042.0px;top:121.2px;width:600px;text-align:center;font-size:16.3px;line-height:19.6px;font-weight:700;color:#1a1a1a;letter-spacing:-0.20px;">FB Leads</div>
<div class="t" style="left:1138.3px;top:121.2px;width:600px;text-align:center;font-size:16.3px;line-height:19.6px;font-weight:700;color:#1a1a1a;letter-spacing:-0.20px;">FB Revenue</div>
<div class="t" style="left:1234.7px;top:121.2px;width:600px;text-align:center;font-size:16.3px;line-height:19.6px;font-weight:700;color:#1a1a1a;letter-spacing:-0.20px;">FB ROAS</div>
<div class="t" style="left:1331.3px;top:114.0px;width:600px;text-align:center;font-size:16.3px;line-height:17px;font-weight:700;color:#1a1a1a;letter-spacing:-0.20px;">Total<br>Revenue</div>
<div class="t" style="left:1411.7px;top:114.0px;width:600px;text-align:center;font-size:16.3px;line-height:17px;font-weight:700;color:#1a1a1a;letter-spacing:-0.20px;">Total<br>ROI</div>
<div class="b" style="left:1101.0px;top:155.8px;width:642.5px;height:53.1px;background:#f2f7fd;border-bottom:1px solid #e4e9ef;box-sizing:border-box;"></div>
<div class="t" style="left:1109.0px;top:175.9px;width:600px;text-align:left;font-size:16.7px;line-height:17px;font-weight:400;color:#111;letter-spacing:-1.46px;">2021-11-11</div>
<div class="t" style="left:932.5px;top:174.4px;width:600px;text-align:center;font-size:16.7px;line-height:20.0px;font-weight:400;color:#111;">Total</div>
<div class="t" style="left:1024.5px;top:167.4px;width:600px;text-align:center;font-size:16.7px;line-height:17px;font-weight:400;color:#111;letter-spacing:-0.24px;">$353,707.<br>01</div>
<div class="t" style="left:1116.0px;top:174.4px;width:600px;text-align:center;font-size:16.7px;line-height:20.0px;font-weight:400;color:#111;letter-spacing:-0.10px;">10886.6</div>
<div class="t" style="left:1503.3px;top:174.4px;width:600px;text-align:left;font-size:16.7px;line-height:20.0px;font-weight:400;color:#111;letter-spacing:0.60px;">0</div>
<div class="b" style="left:1101.0px;top:208.9px;width:642.5px;height:53.1px;background:#fefefe;border-bottom:1px solid #e4e9ef;box-sizing:border-box;"></div>
<div class="t" style="left:932.5px;top:224.5px;width:600px;text-align:center;font-size:16.7px;line-height:20.0px;font-weight:400;color:#8b8b8b;">Facebook</div>
<div class="t" style="left:1024.5px;top:217.5px;width:600px;text-align:center;font-size:16.7px;line-height:17px;font-weight:400;color:#8b8b8b;letter-spacing:-0.01px;">$16,326.8<br>5</div>
<div class="t" style="left:1116.0px;top:224.5px;width:600px;text-align:center;font-size:16.7px;line-height:20.0px;font-weight:400;color:#8b8b8b;letter-spacing:0.40px;">659</div>
<div class="b" style="left:1101.0px;top:262.0px;width:642.5px;height:53.1px;background:#fbfcfe;border-bottom:1px solid #e4e9ef;box-sizing:border-box;"></div>
<div class="t" style="left:932.5px;top:277.6px;width:600px;text-align:center;font-size:16.7px;line-height:20.0px;font-weight:400;color:#8b8b8b;">Adwords</div>
<div class="t" style="left:1024.5px;top:270.6px;width:600px;text-align:center;font-size:16.7px;line-height:17px;font-weight:400;color:#8b8b8b;letter-spacing:-0.10px;">$337,380.<br>16</div>
<div class="t" style="left:1116.0px;top:277.6px;width:600px;text-align:center;font-size:16.7px;line-height:20.0px;font-weight:400;color:#8b8b8b;letter-spacing:-0.31px;">10227.6</div>
<div class="b" style="left:1101.0px;top:315.0px;width:642.5px;height:53.1px;background:#ffffff;border-bottom:1px solid #e4e9ef;box-sizing:border-box;"></div>
<div class="t" style="left:1109.0px;top:326.6px;width:600px;text-align:left;font-size:16.7px;line-height:17px;font-weight:400;color:#111;letter-spacing:-1.09px;">2021-11-<br>10</div>
<div class="t" style="left:932.5px;top:333.6px;width:600px;text-align:center;font-size:16.7px;line-height:20.0px;font-weight:400;color:#111;">Total</div>
<div class="t" style="left:1024.5px;top:326.6px;width:600px;text-align:center;font-size:16.7px;line-height:17px;font-weight:400;color:#111;letter-spacing:0.38px;">$336,440.<br>35</div>
<div class="t" style="left:1116.0px;top:333.6px;width:600px;text-align:center;font-size:16.7px;line-height:20.0px;font-weight:400;color:#111;letter-spacing:-0.63px;">10526.1</div>
<div class="b" style="left:1101.0px;top:368.1px;width:642.5px;height:53.1px;background:#fefefe;border-bottom:1px solid #e4e9ef;box-sizing:border-box;"></div>
<div class="t" style="left:932.5px;top:383.7px;width:600px;text-align:center;font-size:16.7px;line-height:20.0px;font-weight:400;color:#8b8b8b;">Facebook</div>
<div class="t" style="left:1024.5px;top:385.2px;width:600px;text-align:center;font-size:16.7px;line-height:17px;font-weight:400;color:#8b8b8b;letter-spacing:-0.60px;">$15,917.45</div>
<div class="t" style="left:1116.0px;top:383.7px;width:600px;text-align:center;font-size:16.7px;line-height:20.0px;font-weight:400;color:#8b8b8b;letter-spacing:0.40px;">659</div>
<div class="b" style="left:1101.0px;top:421.2px;width:642.5px;height:53.1px;background:#fbfcfe;border-bottom:1px solid #e4e9ef;box-sizing:border-box;"></div>
<div class="t" style="left:932.5px;top:436.8px;width:600px;text-align:center;font-size:16.7px;line-height:20.0px;font-weight:400;color:#8b8b8b;">Adwords</div>
<div class="t" style="left:1024.5px;top:429.8px;width:600px;text-align:center;font-size:16.7px;line-height:17px;font-weight:400;color:#8b8b8b;letter-spacing:0.30px;">$320,522<br>.9</div>
<div class="t" style="left:1116.0px;top:436.8px;width:600px;text-align:center;font-size:16.7px;line-height:20.0px;font-weight:400;color:#8b8b8b;letter-spacing:-0.57px;">9867.1</div>
<div class="b" style="left:1101.0px;top:474.3px;width:642.5px;height:53.1px;background:#f2f7fd;border-bottom:1px solid #e4e9ef;box-sizing:border-box;"></div>
<div class="t" style="left:1109.0px;top:485.9px;width:600px;text-align:left;font-size:16.7px;line-height:17px;font-weight:400;color:#111;letter-spacing:-0.78px;">2021-11-<br>09</div>
<div class="t" style="left:932.5px;top:492.9px;width:600px;text-align:center;font-size:16.7px;line-height:20.0px;font-weight:400;color:#111;">Total</div>
<div class="t" style="left:1024.5px;top:485.9px;width:600px;text-align:center;font-size:16.7px;line-height:17px;font-weight:400;color:#111;letter-spacing:-0.49px;">$319,713.4<br>2</div>
<div class="t" style="left:1116.0px;top:492.9px;width:600px;text-align:center;font-size:16.7px;line-height:20.0px;font-weight:400;color:#111;letter-spacing:-0.20px;">10075.48</div>
<div class="b" style="left:1101.0px;top:527.4px;width:642.5px;height:53.1px;background:#fefefe;border-bottom:1px solid #e4e9ef;box-sizing:border-box;"></div>
<div class="t" style="left:932.5px;top:543.0px;width:600px;text-align:center;font-size:16.7px;line-height:20.0px;font-weight:400;color:#8b8b8b;">Facebook</div>
<div class="t" style="left:1024.5px;top:536.0px;width:600px;text-align:center;font-size:16.7px;line-height:17px;font-weight:400;color:#8b8b8b;letter-spacing:-0.01px;">$15,480.4<br>2</div>
<div class="t" style="left:1116.0px;top:543.0px;width:600px;text-align:center;font-size:16.7px;line-height:20.0px;font-weight:400;color:#8b8b8b;letter-spacing:0.40px;">659</div>
<div class="b" style="left:1101.0px;top:580.4px;width:642.5px;height:53.1px;background:#fbfcfe;border-bottom:1px solid #e4e9ef;box-sizing:border-box;"></div>
<div class="t" style="left:932.5px;top:596.0px;width:600px;text-align:center;font-size:16.7px;line-height:20.0px;font-weight:400;color:#8b8b8b;">Adwords</div>
<div class="t" style="left:1024.5px;top:597.5px;width:600px;text-align:center;font-size:16.7px;line-height:17px;font-weight:400;color:#8b8b8b;letter-spacing:0.44px;">$304,233</div>
<div class="t" style="left:1116.0px;top:596.0px;width:600px;text-align:center;font-size:16.7px;line-height:20.0px;font-weight:400;color:#8b8b8b;letter-spacing:-0.18px;">9416.48</div>
<div class="b" style="left:1101.0px;top:633.5px;width:642.5px;height:53.1px;background:#ffffff;border-bottom:1px solid #e4e9ef;box-sizing:border-box;"></div>
<div class="t" style="left:1109.0px;top:645.1px;width:600px;text-align:left;font-size:16.7px;line-height:17px;font-weight:400;color:#111;letter-spacing:-0.72px;">2021-11-<br>08</div>
<div class="t" style="left:932.5px;top:652.1px;width:600px;text-align:center;font-size:16.7px;line-height:20.0px;font-weight:400;color:#111;">Total</div>
<div class="t" style="left:1024.5px;top:645.1px;width:600px;text-align:center;font-size:16.7px;line-height:17px;font-weight:400;color:#111;letter-spacing:0.38px;">$302,434.<br>23</div>
<div class="t" style="left:1116.0px;top:652.1px;width:600px;text-align:center;font-size:16.7px;line-height:20.0px;font-weight:400;color:#111;letter-spacing:-0.40px;">9571.28</div>
<div class="b" style="left:1101.0px;top:686.6px;width:642.5px;height:53.1px;background:#fefefe;border-bottom:1px solid #e4e9ef;box-sizing:border-box;"></div>
<div class="t" style="left:932.5px;top:702.2px;width:600px;text-align:center;font-size:16.7px;line-height:20.0px;font-weight:400;color:#8b8b8b;">Facebook</div>
<div class="t" style="left:1024.5px;top:695.2px;width:600px;text-align:center;font-size:16.7px;line-height:17px;font-weight:400;color:#8b8b8b;letter-spacing:-0.01px;">$15,086.0<br>4</div>
<div class="t" style="left:1116.0px;top:702.2px;width:600px;text-align:center;font-size:16.7px;line-height:20.0px;font-weight:400;color:#8b8b8b;letter-spacing:0.40px;">659</div>
<div class="b" style="left:1101.0px;top:739.7px;width:642.5px;height:53.1px;background:#fbfcfe;border-bottom:1px solid #e4e9ef;box-sizing:border-box;"></div>
<div class="t" style="left:932.5px;top:755.3px;width:600px;text-align:center;font-size:16.7px;line-height:20.0px;font-weight:400;color:#8b8b8b;">Adwords</div>
<div class="t" style="left:1024.5px;top:748.3px;width:600px;text-align:center;font-size:16.7px;line-height:17px;font-weight:400;color:#8b8b8b;letter-spacing:-0.15px;">$287,348.<br>19</div>
<div class="t" style="left:1116.0px;top:755.3px;width:600px;text-align:center;font-size:16.7px;line-height:20.0px;font-weight:400;color:#8b8b8b;letter-spacing:-0.18px;">8912.28</div>
<div class="b" style="left:1101.0px;top:792.8px;width:642.5px;height:53.1px;background:#f2f7fd;border-bottom:1px solid #e4e9ef;box-sizing:border-box;"></div>
<div class="t" style="left:1109.0px;top:804.4px;width:600px;text-align:left;font-size:16.7px;line-height:17px;font-weight:400;color:#111;letter-spacing:-0.87px;">2021-11-<br>07</div>
<div class="t" style="left:932.5px;top:811.4px;width:600px;text-align:center;font-size:16.7px;line-height:20.0px;font-weight:400;color:#111;">Total</div>
<div class="t" style="left:1024.5px;top:804.4px;width:600px;text-align:center;font-size:16.7px;line-height:17px;font-weight:400;color:#111;letter-spacing:-0.15px;">$284,573.<br>91</div>
<div class="t" style="left:1116.0px;top:811.4px;width:600px;text-align:center;font-size:16.7px;line-height:20.0px;font-weight:400;color:#111;letter-spacing:0.04px;">9079.88</div>
<div class="b" style="left:1101.0px;top:845.8px;width:642.5px;height:53.1px;background:#fefefe;border-bottom:1px solid #e4e9ef;box-sizing:border-box;"></div>
<div class="t" style="left:932.5px;top:861.4px;width:600px;text-align:center;font-size:16.7px;line-height:20.0px;font-weight:400;color:#8b8b8b;">Facebook</div>
<div class="t" style="left:1024.5px;top:854.4px;width:600px;text-align:center;font-size:16.7px;line-height:17px;font-weight:400;color:#8b8b8b;letter-spacing:-0.32px;">$14,720.3<br>7</div>
<div class="t" style="left:1116.0px;top:861.4px;width:600px;text-align:center;font-size:16.7px;line-height:20.0px;font-weight:400;color:#8b8b8b;letter-spacing:0.40px;">659</div>
<div class="b" style="left:1101.0px;top:898.9px;width:642.5px;height:53.1px;background:#fbfcfe;border-bottom:1px solid #e4e9ef;box-sizing:border-box;"></div>
<div class="t" style="left:932.5px;top:914.5px;width:600px;text-align:center;font-size:16.7px;line-height:20.0px;font-weight:400;color:#8b8b8b;">Adwords</div>
<div class="t" style="left:1024.5px;top:907.5px;width:600px;text-align:center;font-size:16.7px;line-height:17px;font-weight:400;color:#8b8b8b;letter-spacing:0.32px;">$269,853.<br>54</div>
<div class="t" style="left:1116.0px;top:914.5px;width:600px;text-align:center;font-size:16.7px;line-height:20.0px;font-weight:400;color:#8b8b8b;letter-spacing:0.43px;">8420.88</div>
<div class="b" style="left:1101.0px;top:952.0px;width:642.5px;height:53.1px;background:#ffffff;border-bottom:1px solid #e4e9ef;box-sizing:border-box;"></div>
<div class="t" style="left:1109.0px;top:963.6px;width:600px;text-align:left;font-size:16.7px;line-height:17px;font-weight:400;color:#111;letter-spacing:-0.72px;">2021-11-<br>06</div>
<div class="t" style="left:932.5px;top:970.6px;width:600px;text-align:center;font-size:16.7px;line-height:20.0px;font-weight:400;color:#111;">Total</div>
<div class="t" style="left:1024.5px;top:963.6px;width:600px;text-align:center;font-size:16.7px;line-height:17px;font-weight:400;color:#111;letter-spacing:-0.29px;">$269,271.<br>75</div>
<div class="t" style="left:1116.0px;top:970.6px;width:600px;text-align:center;font-size:16.7px;line-height:20.0px;font-weight:400;color:#111;letter-spacing:-0.10px;">8618.46</div>
<div class="b" style="left:1101.0px;top:1005.1px;width:642.5px;height:53.1px;background:#fefefe;border-bottom:1px solid #e4e9ef;box-sizing:border-box;"></div>
<div class="t" style="left:932.5px;top:1020.7px;width:600px;text-align:center;font-size:16.7px;line-height:20.0px;font-weight:400;color:#8b8b8b;">Facebook</div>
<div class="t" style="left:1024.5px;top:1013.7px;width:600px;text-align:center;font-size:16.7px;line-height:17px;font-weight:400;color:#8b8b8b;letter-spacing:-0.17px;">$14,367.0<br>6</div>
<div class="t" style="left:1116.0px;top:1020.7px;width:600px;text-align:center;font-size:16.7px;line-height:20.0px;font-weight:400;color:#8b8b8b;letter-spacing:0.40px;">659</div>
<div class="b" style="left:1101.0px;top:1058.2px;width:642.5px;height:44.6px;background:#fbfcfe;border-bottom:1px solid #e4e9ef;box-sizing:border-box;"></div>
<div class="t" style="left:932.5px;top:1073.8px;width:600px;text-align:center;font-size:16.7px;line-height:20.0px;font-weight:400;color:#8b8b8b;">Adwords</div>
<div class="t" style="left:1024.5px;top:1066.8px;width:600px;text-align:center;font-size:16.7px;line-height:17px;font-weight:400;color:#8b8b8b;letter-spacing:0.27px;">$254,904<br>.69</div>
<div class="t" style="left:1116.0px;top:1073.8px;width:600px;text-align:center;font-size:16.7px;line-height:20.0px;font-weight:400;color:#8b8b8b;letter-spacing:0.04px;">7959.46</div>
<div class="b" style="left:1500.5px;top:153.5px;width:487.0px;height:985.5px;border-radius:66px;box-shadow:-30px 8px 50px -2px rgba(0,0,0,0.12), -80px 20px 110px -10px rgba(0,0,0,0.12), -140px 30px 200px -20px rgba(0,0,0,0.05);background:#dfe3ea;"></div><div class="b" style="left:1497.3px;top:292.6px;width:5.0px;height:36.0px;background:#dde2ea;border-radius:2.5px;box-shadow:inset 1px 0 0 #f1f3f6;"></div><div class="b" style="left:1497.3px;top:365.0px;width:5.0px;height:63.5px;background:#dde2ea;border-radius:2.5px;box-shadow:inset 1px 0 0 #f1f3f6;"></div><div class="b" style="left:1497.3px;top:446.5px;width:5.0px;height:63.5px;background:#dde2ea;border-radius:2.5px;box-shadow:inset 1px 0 0 #f1f3f6;"></div><div class="b" style="left:1986.5px;top:373.0px;width:4.8px;height:129.0px;background:#f7f8fa;border-radius:2.5px;border:1px solid #c6cad4;box-sizing:border-box;"></div><div class="b" style="left:1500.5px;top:153.5px;width:487.0px;height:985.5px;border-radius:66px;background:#e3e7ed;box-shadow:inset 0 0 0 0.6px rgba(170,178,192,0.55), inset 9px 0 7px -2px rgba(152,166,192,0.62), inset -13px 0 11px -4px rgba(255,255,255,0.88), inset 0 2.5px 3px rgba(255,255,255,0.85), inset 0 -7px 7px -2px rgba(160,172,194,0.50);"></div><div class="b" id="screen" style="left:1523px;top:175px;width:443px;height:937.5px;border-radius:48px 48px 46px 46px;background:#e3e7ed;overflow:hidden"></div><div class="b" style="left:1711.0px;top:185.5px;width:66.0px;height:8.5px;border-radius:5px;background:#d6dae1;box-shadow:inset 0 1px 1px rgba(120,130,150,0.45),0 1px 0 rgba(255,255,255,0.8);"></div><div class="pill" style="left:1544px;top:228px;width:77px;height:34px;box-shadow:0 1px 2px rgba(0,0,0,0.10)"></div><div class="pill" style="left:1627px;top:228px;width:77px;height:34px;box-shadow:0 1px 2px rgba(0,0,0,0.10)"></div><div class="t" style="left:1283.0px;top:240.7px;width:600px;text-align:center;font-size:8px;line-height:9.6px;font-weight:400;color:#222;letter-spacing:0.25px;">8-24-2020</div><div class="t" style="left:1365.5px;top:240.7px;width:600px;text-align:center;font-size:8px;line-height:9.6px;font-weight:400;color:#222;letter-spacing:0.10px;">11-22-2020</div><div class="t" style="left:1499.0px;top:239.2px;width:600px;text-align:center;font-size:8.3px;line-height:10.0px;font-weight:400;color:#333;letter-spacing:0.15px;">7 Days</div><div class="t" style="left:1544.0px;top:239.2px;width:600px;text-align:center;font-size:8.3px;line-height:10.0px;font-weight:400;color:#333;letter-spacing:0.15px;">30 Days</div><div class="t" style="left:1589.0px;top:239.2px;width:600px;text-align:center;font-size:8.3px;line-height:10.0px;font-weight:400;color:#333;letter-spacing:0.15px;">90 Days</div><div class="t" style="left:1631.3px;top:239.2px;width:600px;text-align:center;font-size:8.3px;line-height:10.0px;font-weight:400;color:#333;letter-spacing:0.15px;">Year</div><div class="pill" style="left:1544.3px;top:273px;width:98.7px;height:27px;box-shadow:0 1px 2px rgba(0,0,0,0.10)"></div><div class="b" style="left:1555.5px;top:279.6px"><svg width="14.6" height="14.6" viewBox="0 0 27 27"><rect x="18" y="0.2" width="8.8" height="26.6" rx="2" fill="#f57c00"/><path d="M18,9.400L26.800,18.200V24.800a2,2 0 0 1 -2,2H18Z" fill="#ef6c00" opacity="0.55"/><path d="M9.200,26.800V11.200a2,2 0 0 1 2,-2H18.100V26.800Z" fill="#ffc107"/><path d="M0.300,20.200a2,2 0 0 1 2,-2H9.300V26.800H2.300a2,2 0 0 1 -2,-2Z" fill="#ffca28"/></svg></div><div class="pill" style="left:1649.7px;top:273px;width:94.6px;height:27px;box-shadow:0 1px 2px rgba(0,0,0,0.10)"></div><div class="b" style="left:1658.9px;top:279.3px"><svg width="15.2" height="15.2" viewBox="0 0 32 32"><circle cx="16" cy="16" r="15.6" fill="#1877f2"/><path d="M21.6,20.4l0.7,-4.5h-4.3v-2.9c0,-1.2 0.6,-2.4 2.5,-2.4h2v-3.8c0,0 -1.8,-0.3 -3.5,-0.3c-3.6,0 -5.9,2.2 -5.9,6.1v3.4h-3.9v4.5h3.9v10.8c0.8,0.1 1.6,0.2 2.4,0.2s1.600,-0.1 2.4,-0.2v-10.800z" fill="#fff"/></svg></div><div class="pill" style="left:1750.6px;top:273px;width:99.0px;height:27px;box-shadow:0 1px 2px rgba(0,0,0,0.10)"></div><div class="b" style="left:1760.6px;top:279.6px"><svg width="15.2" height="15.2" viewBox="0 0 30 30"><path d="M14.300,5.200L4.900,22.200" stroke="#fbbc04" stroke-width="9.600" stroke-linecap="butt" fill="none"/><path d="M14.600,4.900L24.700,22.200" stroke="#4285f4" stroke-width="9.600" stroke-linecap="round" fill="none"/><circle cx="4.900" cy="22.200" r="4.850" fill="#34a853"/></svg></div><div class="pill" style="left:1855.6px;top:273px;width:95.4px;height:27px;box-shadow:0 1px 2px rgba(0,0,0,0.10)"></div><div class="b" style="left:1866.4px;top:279.7px"><svg width="14.6" height="14.6" viewBox="0 0 30 30"><rect x="0.3" y="0.3" width="29.4" height="29.4" rx="4.2" fill="#0a66c2"/><rect x="4.6" y="11.4" width="4.2" height="13.6" fill="#fff"/><circle cx="6.7" cy="6.9" r="2.5" fill="#fff"/><path d="M11.8,11.4h4v1.9c0.8,-1.4 2.4,-2.3 4.4,-2.3c4.2,0 5.2,2.7 5.2,6.300v7.700h-4.200v-6.800c0,-1.700 -0.100,-3.700 -2.400,-3.700c-2.300,0 -2.700,1.800 -2.700,3.600v6.900h-4.300z" fill="#fff"/></svg></div><div class="b" style="left:1523.0px;top:316.9px;width:443.0px;height:458.4px;background:#fff;box-shadow:0 1px 2px rgba(0,0,0,0.12);"></div><div class="t" style="left:1453.5px;top:341.9px;width:600px;text-align:center;font-size:15.6px;line-height:18.7px;font-weight:700;color:#111;letter-spacing:0.35px;">Your Daily Roi Chart</div><div class="b" style="left:1523px;top:382px;width:443px;height:393px;overflow:hidden"><div class="b" style="left:0;top:0;width:1100px;height:1110px;transform-origin:0 0;transform:translate(-55.07px,-120.79px) scale(0.4663)"><svg class="csvg" width="1100" height="1110" viewBox="0 0 1100 1110"><line x1="240" x2="1042" y1="927.2" y2="927.2" stroke="#e3e3e3" stroke-width="1.2" stroke-dasharray="5.6 5.7"/><line x1="240" x2="1042" y1="834.6" y2="834.6" stroke="#e3e3e3" stroke-width="1.2" stroke-dasharray="5.6 5.7"/><line x1="240" x2="1042" y1="742.1" y2="742.1" stroke="#e3e3e3" stroke-width="1.2" stroke-dasharray="5.6 5.7"/><line x1="240" x2="1042" y1="649.5" y2="649.5" stroke="#e3e3e3" stroke-width="1.2" stroke-dasharray="5.6 5.7"/><line x1="240" x2="1042" y1="557.0" y2="557.0" stroke="#e3e3e3" stroke-width="1.2" stroke-dasharray="5.6 5.7"/><line x1="240" x2="1042" y1="464.5" y2="464.5" stroke="#e3e3e3" stroke-width="1.2" stroke-dasharray="5.6 5.7"/><line x1="240" x2="1042" y1="371.9" y2="371.9" stroke="#e3e3e3" stroke-width="1.2" stroke-dasharray="5.6 5.7"/><line x1="240" x2="1042" y1="279.4" y2="279.4" stroke="#e3e3e3" stroke-width="1.2" stroke-dasharray="5.6 5.7"/><line x1="240" x2="1042" y1="186.8" y2="186.8" stroke="#e3e3e3" stroke-width="1.2" stroke-dasharray="5.6 5.7"/><line x1="240" x2="1042" y1="1019.6" y2="1019.6" stroke="#cccccc" stroke-width="1.6"/><path d="M253.0,438.0C263.8,453.7 268.0,509.5 278.8,509.5C289.7,509.5 293.8,523.0 304.7,523.0C315.5,523.0 319.7,559.0 330.5,559.0C341.3,559.0 345.5,494.6 356.3,494.6C367.2,494.6 371.3,549.5 382.2,549.5C393.0,549.5 397.1,546.0 408.0,546.0C418.8,546.0 423.0,480.7 433.8,480.7C444.7,480.7 448.8,526.8 459.7,526.8C470.5,526.8 474.6,506.8 485.5,506.8C496.3,506.8 500.5,464.0 511.3,464.0C522.2,464.0 526.3,512.0 537.2,512.0C548.0,512.0 552.1,576.5 563.0,576.5C573.9,576.5 578.0,446.0 588.8,446.0C599.7,446.0 603.8,487.7 614.7,487.7C625.5,487.7 629.6,513.4 640.5,513.4C651.4,513.4 655.5,463.3 666.3,463.3C677.2,463.3 681.3,590.4 692.2,590.4C703.0,590.4 707.1,545.0 718.0,545.0C728.9,545.0 733.0,724.0 743.8,724.0C754.7,724.0 758.8,481.6 769.7,481.6C780.5,481.6 784.6,382.0 795.5,382.0C806.4,382.0 810.5,387.0 821.3,387.0C832.2,387.0 836.3,305.4 847.2,305.4C858.0,305.4 862.1,254.4 873.0,254.4C883.9,254.4 888.0,327.5 898.8,327.5C909.7,327.5 913.8,254.4 924.7,254.4C935.5,254.4 939.6,231.4 950.5,231.4C961.4,231.4 965.5,195.7 976.3,195.7C987.2,195.7 991.3,240.5 1002.2,240.5C1013.0,240.5 1017.1,298.9 1028.0,315.4L1028.0,1019.5L253.0,1019.5Z" fill="rgba(245,196,80,0.20)" stroke="none"/><path d="M253.0,438.0C263.8,453.7 268.0,509.5 278.8,509.5C289.7,509.5 293.8,523.0 304.7,523.0C315.5,523.0 319.7,559.0 330.5,559.0C341.3,559.0 345.5,494.6 356.3,494.6C367.2,494.6 371.3,549.5 382.2,549.5C393.0,549.5 397.1,546.0 408.0,546.0C418.8,546.0 423.0,480.7 433.8,480.7C444.7,480.7 448.8,526.8 459.7,526.8C470.5,526.8 474.6,506.8 485.5,506.8C496.3,506.8 500.5,464.0 511.3,464.0C522.2,464.0 526.3,512.0 537.2,512.0C548.0,512.0 552.1,576.5 563.0,576.5C573.9,576.5 578.0,446.0 588.8,446.0C599.7,446.0 603.8,487.7 614.7,487.7C625.5,487.7 629.6,513.4 640.5,513.4C651.4,513.4 655.5,463.3 666.3,463.3C677.2,463.3 681.3,590.4 692.2,590.4C703.0,590.4 707.1,545.0 718.0,545.0C728.9,545.0 733.0,724.0 743.8,724.0C754.7,724.0 758.8,481.6 769.7,481.6C780.5,481.6 784.6,382.0 795.5,382.0C806.4,382.0 810.5,387.0 821.3,387.0C832.2,387.0 836.3,305.4 847.2,305.4C858.0,305.4 862.1,254.4 873.0,254.4C883.9,254.4 888.0,327.5 898.8,327.5C909.7,327.5 913.8,254.4 924.7,254.4C935.5,254.4 939.6,231.4 950.5,231.4C961.4,231.4 965.5,195.7 976.3,195.7C987.2,195.7 991.3,240.5 1002.2,240.5C1013.0,240.5 1017.1,298.9 1028.0,315.4" fill="none" stroke="#ecb834" stroke-width="3" stroke-linejoin="round" stroke-linecap="round"/><path d="M253.0,696.6C263.8,708.9 268.0,752.3 278.8,752.3C289.7,752.3 293.8,767.5 304.7,767.5C315.5,767.5 319.7,794.5 330.5,794.5C341.3,794.5 345.5,748.8 356.3,748.8C367.2,748.8 371.3,755.4 382.2,755.4C393.0,755.4 397.1,752.3 408.0,752.3C418.8,752.3 423.0,660.0 433.8,660.0C444.7,660.0 448.8,739.3 459.7,739.3C470.5,739.3 474.6,751.4 485.5,751.4C496.3,751.4 500.5,761.4 511.3,761.4C522.2,761.4 526.3,733.6 537.2,733.6C548.0,733.6 552.1,766.2 563.0,766.2C573.9,766.2 578.0,731.9 588.8,731.9C599.7,731.9 603.8,695.7 614.7,695.7C625.5,695.7 629.6,698.8 640.5,698.8C651.4,698.8 655.5,670.9 666.3,670.9C677.2,670.9 681.3,806.0 692.2,806.0C703.0,806.0 707.1,772.0 718.0,772.0C728.9,772.0 733.0,798.0 743.8,798.0C754.7,798.0 758.8,700.0 769.7,700.0C780.5,700.0 784.6,650.0 795.5,650.0C806.4,650.0 810.5,716.3 821.3,716.3C832.2,716.3 836.3,650.0 847.2,650.0C858.0,650.0 862.1,675.0 873.0,675.0C883.9,675.0 888.0,651.4 898.8,651.4C909.7,651.4 913.8,575.3 924.7,575.3C935.5,575.3 939.6,562.2 950.5,562.2C961.4,562.2 965.5,556.6 976.3,556.6C987.2,556.6 991.3,578.3 1002.2,578.3C1013.0,578.3 1017.1,665.9 1028.0,690.6L1028.0,1019.5L253.0,1019.5Z" fill="rgba(60,150,60,0.20)" stroke="none"/><path d="M253.0,696.6C263.8,708.9 268.0,752.3 278.8,752.3C289.7,752.3 293.8,767.5 304.7,767.5C315.5,767.5 319.7,794.5 330.5,794.5C341.3,794.5 345.5,748.8 356.3,748.8C367.2,748.8 371.3,755.4 382.2,755.4C393.0,755.4 397.1,752.3 408.0,752.3C418.8,752.3 423.0,660.0 433.8,660.0C444.7,660.0 448.8,739.3 459.7,739.3C470.5,739.3 474.6,751.4 485.5,751.4C496.3,751.4 500.5,761.4 511.3,761.4C522.2,761.4 526.3,733.6 537.2,733.6C548.0,733.6 552.1,766.2 563.0,766.2C573.9,766.2 578.0,731.9 588.8,731.9C599.7,731.9 603.8,695.7 614.7,695.7C625.5,695.7 629.6,698.8 640.5,698.8C651.4,698.8 655.5,670.9 666.3,670.9C677.2,670.9 681.3,806.0 692.2,806.0C703.0,806.0 707.1,772.0 718.0,772.0C728.9,772.0 733.0,798.0 743.8,798.0C754.7,798.0 758.8,700.0 769.7,700.0C780.5,700.0 784.6,650.0 795.5,650.0C806.4,650.0 810.5,716.3 821.3,716.3C832.2,716.3 836.3,650.0 847.2,650.0C858.0,650.0 862.1,675.0 873.0,675.0C883.9,675.0 888.0,651.4 898.8,651.4C909.7,651.4 913.8,575.3 924.7,575.3C935.5,575.3 939.6,562.2 950.5,562.2C961.4,562.2 965.5,556.6 976.3,556.6C987.2,556.6 991.3,578.3 1002.2,578.3C1013.0,578.3 1017.1,665.9 1028.0,690.6" fill="none" stroke="#2c9a3c" stroke-width="3" stroke-linejoin="round" stroke-linecap="round"/><path d="M253.0,972.0C263.8,972.5 268.0,974.2 278.8,974.2C289.7,974.2 293.8,981.6 304.7,981.6C315.5,981.6 319.7,986.4 330.5,986.4C341.3,986.4 345.5,988.6 356.3,988.6C367.2,988.6 371.3,984.7 382.2,984.7C393.0,984.7 397.1,983.4 408.0,983.4C418.8,983.4 423.0,981.2 433.8,981.2C444.7,981.2 448.8,976.9 459.7,976.9C470.5,976.9 474.6,977.7 485.5,977.7C496.3,977.7 500.5,973.4 511.3,973.4C522.2,973.4 526.3,979.9 537.2,979.9C548.0,979.9 552.1,983.8 563.0,983.8C573.9,983.8 578.0,981.0 588.8,981.0C599.7,981.0 603.8,979.0 614.7,979.0C625.5,979.0 629.6,977.0 640.5,977.0C651.4,977.0 655.5,975.0 666.3,975.0C677.2,975.0 681.3,973.0 692.2,973.0C703.0,973.0 707.1,971.5 718.0,971.5C728.9,971.5 733.0,970.2 743.8,970.2C754.7,970.2 758.8,968.0 769.7,968.0C780.5,968.0 784.6,966.0 795.5,966.0C806.4,966.0 810.5,964.0 821.3,964.0C832.2,964.0 836.3,962.0 847.2,962.0C858.0,962.0 862.1,960.0 873.0,960.0C883.9,960.0 888.0,957.0 898.8,957.0C909.7,957.0 913.8,951.0 924.7,951.0C935.5,951.0 939.6,939.5 950.5,939.5C961.4,939.5 965.5,943.0 976.3,943.0C987.2,943.0 991.3,942.5 1002.2,942.5C1013.0,942.5 1017.1,941.7 1028.0,941.5L1028.0,1019.5L253.0,1019.5Z" fill="rgba(150,215,200,0.20)" stroke="none"/><path d="M253.0,972.0C263.8,972.5 268.0,974.2 278.8,974.2C289.7,974.2 293.8,981.6 304.7,981.6C315.5,981.6 319.7,986.4 330.5,986.4C341.3,986.4 345.5,988.6 356.3,988.6C367.2,988.6 371.3,984.7 382.2,984.7C393.0,984.7 397.1,983.4 408.0,983.4C418.8,983.4 423.0,981.2 433.8,981.2C444.7,981.2 448.8,976.9 459.7,976.9C470.5,976.9 474.6,977.7 485.5,977.7C496.3,977.7 500.5,973.4 511.3,973.4C522.2,973.4 526.3,979.9 537.2,979.9C548.0,979.9 552.1,983.8 563.0,983.8C573.9,983.8 578.0,981.0 588.8,981.0C599.7,981.0 603.8,979.0 614.7,979.0C625.5,979.0 629.6,977.0 640.5,977.0C651.4,977.0 655.5,975.0 666.3,975.0C677.2,975.0 681.3,973.0 692.2,973.0C703.0,973.0 707.1,971.5 718.0,971.5C728.9,971.5 733.0,970.2 743.8,970.2C754.7,970.2 758.8,968.0 769.7,968.0C780.5,968.0 784.6,966.0 795.5,966.0C806.4,966.0 810.5,964.0 821.3,964.0C832.2,964.0 836.3,962.0 847.2,962.0C858.0,962.0 862.1,960.0 873.0,960.0C883.9,960.0 888.0,957.0 898.8,957.0C909.7,957.0 913.8,951.0 924.7,951.0C935.5,951.0 939.6,939.5 950.5,939.5C961.4,939.5 965.5,943.0 976.3,943.0C987.2,943.0 991.3,942.5 1002.2,942.5C1013.0,942.5 1017.1,941.7 1028.0,941.5" fill="none" stroke="#96d6b4" stroke-width="4.2" stroke-linejoin="round" stroke-linecap="round"/><path d="M253.0,965.5C263.8,971.2 268.0,991.6 278.8,991.6C289.7,991.6 293.8,988.6 304.7,988.6C315.5,988.6 319.7,973.4 330.5,973.4C341.3,973.4 345.5,997.7 356.3,997.7C367.2,997.7 371.3,993.0 382.2,993.0C393.0,993.0 397.1,998.6 408.0,998.6C418.8,998.6 423.0,979.5 433.8,979.5C444.7,979.5 448.8,985.6 459.7,985.6C470.5,985.6 474.6,983.0 485.5,983.0C496.3,983.0 500.5,969.0 511.3,969.0C522.2,969.0 526.3,971.2 537.2,971.2C548.0,971.2 552.1,998.2 563.0,998.2C573.9,998.2 578.0,976.0 588.8,976.0C599.7,976.0 603.8,982.0 614.7,982.0C625.5,982.0 629.6,986.0 640.5,986.0C651.4,986.0 655.5,981.0 666.3,981.0C677.2,981.0 681.3,988.0 692.2,988.0C703.0,988.0 707.1,990.0 718.0,990.0C728.9,990.0 733.0,1016.5 743.8,1016.5C754.7,1016.5 758.8,1017.0 769.7,1017.0C780.5,1017.0 784.6,1017.0 795.5,1017.0C806.4,1017.0 810.5,1017.0 821.3,1017.0C832.2,1017.0 836.3,1017.0 847.2,1017.0C858.0,1017.0 862.1,1017.0 873.0,1017.0C883.9,1017.0 888.0,1017.0 898.8,1017.0C909.7,1017.0 913.8,1017.0 924.7,1017.0C935.5,1017.0 939.6,1017.0 950.5,1017.0C961.4,1017.0 965.5,1017.0 976.3,1017.0C987.2,1017.0 991.3,1017.0 1002.2,1017.0C1013.0,1017.0 1017.1,1017.0 1028.0,1017.0L1028.0,1019.5L253.0,1019.5Z" fill="rgba(200,215,245,0.10)" stroke="none"/><path d="M253.0,965.5C263.8,971.2 268.0,991.6 278.8,991.6C289.7,991.6 293.8,988.6 304.7,988.6C315.5,988.6 319.7,973.4 330.5,973.4C341.3,973.4 345.5,997.7 356.3,997.7C367.2,997.7 371.3,993.0 382.2,993.0C393.0,993.0 397.1,998.6 408.0,998.6C418.8,998.6 423.0,979.5 433.8,979.5C444.7,979.5 448.8,985.6 459.7,985.6C470.5,985.6 474.6,983.0 485.5,983.0C496.3,983.0 500.5,969.0 511.3,969.0C522.2,969.0 526.3,971.2 537.2,971.2C548.0,971.2 552.1,998.2 563.0,998.2C573.9,998.2 578.0,976.0 588.8,976.0C599.7,976.0 603.8,982.0 614.7,982.0C625.5,982.0 629.6,986.0 640.5,986.0C651.4,986.0 655.5,981.0 666.3,981.0C677.2,981.0 681.3,988.0 692.2,988.0C703.0,988.0 707.1,990.0 718.0,990.0C728.9,990.0 733.0,1016.5 743.8,1016.5C754.7,1016.5 758.8,1017.0 769.7,1017.0C780.5,1017.0 784.6,1017.0 795.5,1017.0C806.4,1017.0 810.5,1017.0 821.3,1017.0C832.2,1017.0 836.3,1017.0 847.2,1017.0C858.0,1017.0 862.1,1017.0 873.0,1017.0C883.9,1017.0 888.0,1017.0 898.8,1017.0C909.7,1017.0 913.8,1017.0 924.7,1017.0C935.5,1017.0 939.6,1017.0 950.5,1017.0C961.4,1017.0 965.5,1017.0 976.3,1017.0C987.2,1017.0 991.3,1017.0 1002.2,1017.0C1013.0,1017.0 1017.1,1017.0 1028.0,1017.0" fill="none" stroke="#003c7d" stroke-width="3" stroke-linejoin="round" stroke-linecap="round"/><path d="M253.0,1017.4C263.8,1017.4 268.0,1017.4 278.8,1017.4C289.7,1017.4 293.8,1017.4 304.7,1017.4C315.5,1017.4 319.7,1017.4 330.5,1017.4C341.3,1017.4 345.5,1017.4 356.3,1017.4C367.2,1017.4 371.3,1017.4 382.2,1017.4C393.0,1017.4 397.1,1017.4 408.0,1017.4C418.8,1017.4 423.0,1017.4 433.8,1017.4C444.7,1017.4 448.8,1017.4 459.7,1017.4C470.5,1017.4 474.6,1017.4 485.5,1017.4C496.3,1017.4 500.5,1017.4 511.3,1017.4C522.2,1017.4 526.3,1017.4 537.2,1017.4C548.0,1017.4 552.1,1017.4 563.0,1017.4C573.9,1017.4 578.0,1017.0 588.8,1017.0C599.7,1017.0 603.8,1016.5 614.7,1016.5C625.5,1016.5 629.6,1016.0 640.5,1016.0C651.4,1016.0 655.5,1015.5 666.3,1015.5C677.2,1015.5 681.3,1015.0 692.2,1015.0C703.0,1015.0 707.1,1015.0 718.0,1015.0C728.9,1015.0 733.0,1016.0 743.8,1016.0C754.7,1016.0 758.8,1017.0 769.7,1017.0C780.5,1017.0 784.6,1017.4 795.5,1017.4C806.4,1017.4 810.5,1017.4 821.3,1017.4C832.2,1017.4 836.3,1017.4 847.2,1017.4C858.0,1017.4 862.1,1017.4 873.0,1017.4C883.9,1017.4 888.0,1017.4 898.8,1017.4C909.7,1017.4 913.8,1017.4 924.7,1017.4C935.5,1017.4 939.6,1017.4 950.5,1017.4C961.4,1017.4 965.5,1017.4 976.3,1017.4C987.2,1017.4 991.3,1017.4 1002.2,1017.4C1013.0,1017.4 1017.1,1017.4 1028.0,1017.4L1028.0,1019.5L253.0,1019.5Z" fill="rgba(120,140,220,0.0)" stroke="none"/><path d="M253.0,1017.4C263.8,1017.4 268.0,1017.4 278.8,1017.4C289.7,1017.4 293.8,1017.4 304.7,1017.4C315.5,1017.4 319.7,1017.4 330.5,1017.4C341.3,1017.4 345.5,1017.4 356.3,1017.4C367.2,1017.4 371.3,1017.4 382.2,1017.4C393.0,1017.4 397.1,1017.4 408.0,1017.4C418.8,1017.4 423.0,1017.4 433.8,1017.4C444.7,1017.4 448.8,1017.4 459.7,1017.4C470.5,1017.4 474.6,1017.4 485.5,1017.4C496.3,1017.4 500.5,1017.4 511.3,1017.4C522.2,1017.4 526.3,1017.4 537.2,1017.4C548.0,1017.4 552.1,1017.4 563.0,1017.4C573.9,1017.4 578.0,1017.0 588.8,1017.0C599.7,1017.0 603.8,1016.5 614.7,1016.5C625.5,1016.5 629.6,1016.0 640.5,1016.0C651.4,1016.0 655.5,1015.5 666.3,1015.5C677.2,1015.5 681.3,1015.0 692.2,1015.0C703.0,1015.0 707.1,1015.0 718.0,1015.0C728.9,1015.0 733.0,1016.0 743.8,1016.0C754.7,1016.0 758.8,1017.0 769.7,1017.0C780.5,1017.0 784.6,1017.4 795.5,1017.4C806.4,1017.4 810.5,1017.4 821.3,1017.4C832.2,1017.4 836.3,1017.4 847.2,1017.4C858.0,1017.4 862.1,1017.4 873.0,1017.4C883.9,1017.4 888.0,1017.4 898.8,1017.4C909.7,1017.4 913.8,1017.4 924.7,1017.4C935.5,1017.4 939.6,1017.4 950.5,1017.4C961.4,1017.4 965.5,1017.4 976.3,1017.4C987.2,1017.4 991.3,1017.4 1002.2,1017.4C1013.0,1017.4 1017.1,1017.4 1028.0,1017.4" fill="none" stroke="#8ca5d7" stroke-width="4.6" stroke-linejoin="round" stroke-linecap="round"/><line x1="746" x2="746" y1="186.5" y2="1019" stroke="#9a9a9a" stroke-width="1.3" stroke-dasharray="4 3.5"/></svg><div class="t" style="left:-374.5px;top:1011.6px;width:600px;text-align:right;font-size:14px;line-height:16.8px;font-weight:400;color:#a3abb9;letter-spacing:0.50px;-webkit-text-stroke:0.3px #a3abb9;">0</div><div class="t" style="left:-374.5px;top:919.1px;width:600px;text-align:right;font-size:14px;line-height:16.8px;font-weight:400;color:#a3abb9;letter-spacing:0.34px;-webkit-text-stroke:0.3px #a3abb9;">20,000</div><div class="t" style="left:-374.5px;top:826.5px;width:600px;text-align:right;font-size:14px;line-height:16.8px;font-weight:400;color:#a3abb9;letter-spacing:0.34px;-webkit-text-stroke:0.3px #a3abb9;">40,000</div><div class="t" style="left:-374.5px;top:734.0px;width:600px;text-align:right;font-size:14px;line-height:16.8px;font-weight:400;color:#a3abb9;letter-spacing:0.34px;-webkit-text-stroke:0.3px #a3abb9;">60,000</div><div class="t" style="left:-374.5px;top:641.4px;width:600px;text-align:right;font-size:14px;line-height:16.8px;font-weight:400;color:#a3abb9;letter-spacing:0.34px;-webkit-text-stroke:0.3px #a3abb9;">80,000</div><div class="t" style="left:-374.5px;top:548.9px;width:600px;text-align:right;font-size:14px;line-height:16.8px;font-weight:400;color:#a3abb9;letter-spacing:-0.08px;-webkit-text-stroke:0.3px #a3abb9;">100,000</div><div class="t" style="left:-374.5px;top:456.4px;width:600px;text-align:right;font-size:14px;line-height:16.8px;font-weight:400;color:#a3abb9;letter-spacing:-0.08px;-webkit-text-stroke:0.3px #a3abb9;">120,000</div><div class="t" style="left:-374.5px;top:363.8px;width:600px;text-align:right;font-size:14px;line-height:16.8px;font-weight:400;color:#a3abb9;letter-spacing:-0.08px;-webkit-text-stroke:0.3px #a3abb9;">140,000</div><div class="t" style="left:-374.5px;top:271.3px;width:600px;text-align:right;font-size:14px;line-height:16.8px;font-weight:400;color:#a3abb9;letter-spacing:-0.08px;-webkit-text-stroke:0.3px #a3abb9;">160,000</div><div class="t" style="left:-374.5px;top:178.7px;width:600px;text-align:right;font-size:14px;line-height:16.8px;font-weight:400;color:#a3abb9;letter-spacing:-0.08px;-webkit-text-stroke:0.3px #a3abb9;">180,000</div><div class="t" style="left:-61.0px;top:1032.8px;width:600px;text-align:center;font-size:13.8px;line-height:16.6px;font-weight:400;color:#a3abb9;letter-spacing:-0.34px;-webkit-text-stroke:0.3px #a3abb9;">Oct 12</div><div class="t" style="left:16.5px;top:1032.8px;width:600px;text-align:center;font-size:13.8px;line-height:16.6px;font-weight:400;color:#a3abb9;letter-spacing:-0.34px;-webkit-text-stroke:0.3px #a3abb9;">Oct 15</div><div class="t" style="left:94.0px;top:1032.8px;width:600px;text-align:center;font-size:13.8px;line-height:16.6px;font-weight:400;color:#a3abb9;letter-spacing:-0.34px;-webkit-text-stroke:0.3px #a3abb9;">Oct 18</div><div class="t" style="left:171.5px;top:1032.8px;width:600px;text-align:center;font-size:13.8px;line-height:16.6px;font-weight:400;color:#a3abb9;letter-spacing:-0.34px;-webkit-text-stroke:0.3px #a3abb9;">Oct 21</div><div class="t" style="left:249.0px;top:1032.8px;width:600px;text-align:center;font-size:13.8px;line-height:16.6px;font-weight:400;color:#a3abb9;letter-spacing:0.17px;-webkit-text-stroke:0.3px #a3abb9;">Oct 24</div><div class="t" style="left:326.5px;top:1032.8px;width:600px;text-align:center;font-size:13.8px;line-height:16.6px;font-weight:400;color:#a3abb9;letter-spacing:-0.05px;-webkit-text-stroke:0.3px #a3abb9;">Oct 27</div><div class="t" style="left:404.0px;top:1032.8px;width:600px;text-align:center;font-size:13.8px;line-height:16.6px;font-weight:400;color:#a3abb9;letter-spacing:0.17px;-webkit-text-stroke:0.3px #a3abb9;">Oct 30</div><div class="t" style="left:481.5px;top:1032.8px;width:600px;text-align:center;font-size:13.8px;line-height:16.6px;font-weight:400;color:#a3abb9;letter-spacing:0.17px;-webkit-text-stroke:0.3px #a3abb9;">Nov 02</div><div class="t" style="left:559.0px;top:1032.8px;width:600px;text-align:center;font-size:13.8px;line-height:16.6px;font-weight:400;color:#a3abb9;letter-spacing:0.17px;-webkit-text-stroke:0.3px #a3abb9;">Nov 05</div><div class="t" style="left:637.0px;top:1032.8px;width:600px;text-align:center;font-size:13.8px;line-height:16.6px;font-weight:400;color:#a3abb9;letter-spacing:0.17px;-webkit-text-stroke:0.3px #a3abb9;">Nov 08</div><div class="t" style="left:714.5px;top:1032.8px;width:600px;text-align:center;font-size:13.8px;line-height:16.6px;font-weight:400;color:#a3abb9;letter-spacing:-0.86px;-webkit-text-stroke:0.3px #a3abb9;">Nov 11</div><div class="b" style="left:203.0px;top:1055.6px;width:32.0px;height:33.8px;background:#fcf3df;border-top:3px solid #ecb834;box-sizing:border-box;"></div><div class="t" style="left:243.0px;top:1061.1px;width:600px;text-align:left;font-size:19px;line-height:22.8px;font-weight:400;color:#151515;">Total Revenue</div><div class="b" style="left:400.0px;top:1055.6px;width:32.0px;height:33.8px;background:#d6ead5;border-top:3px solid #2c9a3c;box-sizing:border-box;"></div><div class="t" style="left:440.0px;top:1061.1px;width:600px;text-align:left;font-size:19px;line-height:22.8px;font-weight:400;color:#151515;">Adwords Revenue</div><div class="b" style="left:634.0px;top:1055.6px;width:32.0px;height:33.8px;background:#e6f5ee;border-top:3px solid #96d6b4;box-sizing:border-box;"></div><div class="t" style="left:674.0px;top:1061.1px;width:600px;text-align:left;font-size:19px;line-height:22.8px;font-weight:400;color:#151515;">Adwords Spend</div><div class="b" style="left:847.0px;top:1055.6px;width:32.0px;height:33.8px;background:#f5f7fc;border-top:3px solid #003c7d;box-sizing:border-box;"></div><div class="t" style="left:887.0px;top:1061.1px;width:600px;text-align:left;font-size:19px;line-height:22.8px;font-weight:400;color:#151515;">FB Revenue</div><div class="tip" style="left:580.5px;top:739.5px;width:325.5px;height:255px;"></div><svg class="b" style="left:734px;top:994.2px" width="22" height="11" viewBox="0 0 22 11"><path d="M3,0L11,9L19,0Z" fill="#f5f5f5"/><path d="M3,0.3L11,9L19,0.3" fill="none" stroke="rgba(0,0,0,0.12)" stroke-width="1"/></svg><div class="t" style="left:598.8px;top:748.0px;width:600px;text-align:left;font-size:17.6px;line-height:21.1px;font-weight:400;color:#222;letter-spacing:-0.21px;">Sunday, Oct 31st 2021:</div><div class="t" style="left:598.8px;top:784.7px;width:600px;text-align:left;font-size:17.6px;line-height:21.1px;font-weight:400;color:#222;letter-spacing:-0.03px;">Facebook Spend: $778.89</div><div class="t" style="left:598.8px;top:803.1px;width:600px;text-align:left;font-size:17.6px;line-height:21.1px;font-weight:400;color:#222;">Facebook Revenue (Async): $377.53</div><div class="t" style="left:598.8px;top:821.5px;width:600px;text-align:left;font-size:17.6px;line-height:21.1px;font-weight:400;color:#222;letter-spacing:0.05px;">Facebook ROAS (Async): <b>0.48x</b></div><div class="t" style="left:598.8px;top:857.9px;width:600px;text-align:left;font-size:17.6px;line-height:21.1px;font-weight:400;color:#222;letter-spacing:-0.04px;">Adwords Spend: $10,335</div><div class="t" style="left:598.8px;top:876.2px;width:600px;text-align:left;font-size:17.6px;line-height:21.1px;font-weight:400;color:#222;letter-spacing:-0.13px;">Adwords Revenue: $47,647.18</div><div class="t" style="left:598.8px;top:894.6px;width:600px;text-align:left;font-size:17.6px;line-height:21.1px;font-weight:400;color:#222;letter-spacing:-0.14px;">Adwords ROAS: <b>4.61x</b></div><div class="t" style="left:598.8px;top:931.2px;width:600px;text-align:left;font-size:17.6px;line-height:21.1px;font-weight:400;color:#222;letter-spacing:0.04px;">Total Revenue: $63,972</div><div class="t" style="left:598.8px;top:949.7px;width:600px;text-align:left;font-size:17.6px;line-height:21.1px;font-weight:400;color:#222;letter-spacing:-0.54px;">Total Spend: $11,113.89</div><div class="t" style="left:598.8px;top:968.0px;width:600px;text-align:left;font-size:17.6px;line-height:21.1px;font-weight:400;color:#222;letter-spacing:-0.02px;">Total ROI: <b>5.76x</b></div></div></div><div class="b" style="left:1523.0px;top:777.8px;width:443.0px;height:49.2px;background:#c5e5f5;border-radius:4px 4px 0 0;"></div><div class="t" style="left:1268.4px;top:794.8px;width:600px;text-align:center;font-size:11px;line-height:13.2px;font-weight:700;color:#111;letter-spacing:0.15px;">Region</div><div class="t" style="left:1360.7px;top:794.8px;width:600px;text-align:center;font-size:11px;line-height:13.2px;font-weight:700;color:#111;letter-spacing:0.15px;">Spend</div><div class="t" style="left:1440.8px;top:794.8px;width:600px;text-align:center;font-size:11px;line-height:13.2px;font-weight:700;color:#111;letter-spacing:0.15px;">Revenue</div><div class="t" style="left:1528.0px;top:794.8px;width:600px;text-align:center;font-size:11px;line-height:13.2px;font-weight:700;color:#111;letter-spacing:0.15px;">Leads</div><div class="t" style="left:1607.7px;top:794.8px;width:600px;text-align:center;font-size:11px;line-height:13.2px;font-weight:700;color:#111;letter-spacing:0.15px;">ROAS</div><div class="b" style="left:1523.0px;top:826.8px;width:443.0px;height:43.6px;background:#f2f9fe;"></div><div class="t" style="left:1554.3px;top:843.4px;width:600px;text-align:left;font-size:9.4px;line-height:11.3px;font-weight:400;color:#1a1a1a;letter-spacing:0.42px;">Hungary</div><div class="t" style="left:1360.8px;top:843.0px;width:600px;text-align:center;font-size:9.9px;line-height:11.9px;font-weight:400;color:#1a1a1a;letter-spacing:-0.62px;">$12.91</div><div class="t" style="left:1440.8px;top:843.0px;width:600px;text-align:center;font-size:9.9px;line-height:11.9px;font-weight:400;color:#1a1a1a;letter-spacing:-0.02px;">$87.86</div><div class="t" style="left:1521.8px;top:843.0px;width:600px;text-align:center;font-size:9.9px;line-height:11.9px;font-weight:400;color:#1a1a1a;letter-spacing:0.36px;">20</div><div class="b" style="left:1871.3px;top:834.7px;width:73.3px;height:28.0px;border-radius:14px;background:#0d9be1;"></div><div class="t" style="left:1608.0px;top:843.5px;width:600px;text-align:center;font-size:9.3px;line-height:11.2px;font-weight:700;color:#fff;letter-spacing:0.20px;">6.81X</div><div class="b" style="left:1523.0px;top:870.3px;width:443.0px;height:43.6px;background:#ffffff;"></div><div class="t" style="left:1554.3px;top:886.9px;width:600px;text-align:left;font-size:9.4px;line-height:11.3px;font-weight:400;color:#1a1a1a;letter-spacing:0.42px;">Croatia</div><div class="t" style="left:1360.8px;top:886.5px;width:600px;text-align:center;font-size:9.9px;line-height:11.9px;font-weight:400;color:#1a1a1a;letter-spacing:-0.62px;">$12.91</div><div class="t" style="left:1440.8px;top:886.5px;width:600px;text-align:center;font-size:9.9px;line-height:11.9px;font-weight:400;color:#1a1a1a;letter-spacing:-0.02px;">$87.86</div><div class="t" style="left:1521.8px;top:886.5px;width:600px;text-align:center;font-size:9.9px;line-height:11.9px;font-weight:400;color:#1a1a1a;letter-spacing:0.36px;">20</div><div class="b" style="left:1871.3px;top:878.2px;width:73.3px;height:28.0px;border-radius:14px;background:#0d9be1;"></div><div class="t" style="left:1608.0px;top:887.0px;width:600px;text-align:center;font-size:9.3px;line-height:11.2px;font-weight:700;color:#fff;letter-spacing:0.20px;">6.81X</div><div class="b" style="left:1523.0px;top:913.8px;width:443.0px;height:43.6px;background:#f2f9fe;"></div><div class="t" style="left:1554.3px;top:930.4px;width:600px;text-align:left;font-size:9.4px;line-height:11.3px;font-weight:400;color:#1a1a1a;letter-spacing:0.42px;">Czech Republic</div><div class="t" style="left:1360.8px;top:930.0px;width:600px;text-align:center;font-size:9.9px;line-height:11.9px;font-weight:400;color:#1a1a1a;letter-spacing:-0.62px;">$12.91</div><div class="t" style="left:1440.8px;top:930.0px;width:600px;text-align:center;font-size:9.9px;line-height:11.9px;font-weight:400;color:#1a1a1a;letter-spacing:-0.02px;">$87.86</div><div class="t" style="left:1521.8px;top:930.0px;width:600px;text-align:center;font-size:9.9px;line-height:11.9px;font-weight:400;color:#1a1a1a;letter-spacing:0.36px;">20</div><div class="b" style="left:1871.3px;top:921.7px;width:73.3px;height:28.0px;border-radius:14px;background:#86d5f9;"></div><div class="t" style="left:1608.0px;top:930.5px;width:600px;text-align:center;font-size:9.3px;line-height:11.2px;font-weight:700;color:#e6f6fe;letter-spacing:0.20px;">6.81X</div><div class="b" style="left:1523.0px;top:957.3px;width:443.0px;height:43.6px;background:#ffffff;"></div><div class="t" style="left:1554.3px;top:973.9px;width:600px;text-align:left;font-size:9.4px;line-height:11.3px;font-weight:400;color:#1a1a1a;letter-spacing:0.42px;">Croatia</div><div class="t" style="left:1360.8px;top:973.5px;width:600px;text-align:center;font-size:9.9px;line-height:11.9px;font-weight:400;color:#1a1a1a;letter-spacing:-0.62px;">$12.91</div><div class="t" style="left:1440.8px;top:973.5px;width:600px;text-align:center;font-size:9.9px;line-height:11.9px;font-weight:400;color:#1a1a1a;letter-spacing:-0.02px;">$87.86</div><div class="t" style="left:1521.8px;top:973.5px;width:600px;text-align:center;font-size:9.9px;line-height:11.9px;font-weight:400;color:#1a1a1a;letter-spacing:0.36px;">20</div><div class="b" style="left:1871.3px;top:965.2px;width:73.3px;height:28.0px;border-radius:14px;background:#86d5f9;"></div><div class="t" style="left:1608.0px;top:974.0px;width:600px;text-align:center;font-size:9.3px;line-height:11.2px;font-weight:700;color:#e6f6fe;letter-spacing:0.20px;">6.81X</div><div class="b" style="left:1523.0px;top:1000.8px;width:443.0px;height:43.6px;background:#f2f9fe;"></div><div class="t" style="left:1554.3px;top:1017.4px;width:600px;text-align:left;font-size:9.4px;line-height:11.3px;font-weight:400;color:#1a1a1a;letter-spacing:0.42px;">Hungary</div><div class="t" style="left:1360.8px;top:1017.0px;width:600px;text-align:center;font-size:9.9px;line-height:11.9px;font-weight:400;color:#1a1a1a;letter-spacing:-0.62px;">$12.91</div><div class="t" style="left:1440.8px;top:1017.0px;width:600px;text-align:center;font-size:9.9px;line-height:11.9px;font-weight:400;color:#1a1a1a;letter-spacing:-0.02px;">$87.86</div><div class="t" style="left:1521.8px;top:1017.0px;width:600px;text-align:center;font-size:9.9px;line-height:11.9px;font-weight:400;color:#1a1a1a;letter-spacing:0.36px;">20</div><div class="b" style="left:1871.3px;top:1008.7px;width:73.3px;height:28.0px;border-radius:14px;background:#86d5f9;"></div><div class="t" style="left:1608.0px;top:1017.5px;width:600px;text-align:center;font-size:9.3px;line-height:11.2px;font-weight:700;color:#e6f6fe;letter-spacing:0.20px;">6.81X</div><div class="b" style="left:1523px;top:1043.8px;width:443px;height:68.7px;background:#f4f4f4;border-radius:0 0 46px 46px"></div><div class="b" style="left:1552.6px;top:1058.6px;width:40.6px;height:40.6px;border-radius:50%;background:radial-gradient(circle,#e6eff5 0%,#dbe9f2 55%,#cfe3ef 100%);"></div><div class="ico" style="left:1560.9px;top:1066.9px"><svg width="24" height="24" viewBox="0 0 40 40" fill="none" stroke="#2ea3dc" stroke-width="1.9" stroke-linecap="round" stroke-linejoin="round" style="overflow:visible"><circle cx="20" cy="20" r="18.3"/><path d="M24.4,15.6c-0.6,-2.1 -2.3,-3.2 -4.5,-3.2c-2.7,0 -4.5,1.5 -4.5,3.7c0,2.3 1.8,3.1 4.6,3.8c3,0.8 4.8,1.8 4.8,4.2c0,2.4 -2,3.9 -4.8,3.9c-2.7,0 -4.5,-1.3 -5,-3.5M20,9.6v2.8M20,28v2.8"/></svg></div><div class="ico" style="left:1609.7px;top:1066.9px"><svg width="24" height="24" viewBox="0 0 40 40" fill="none" stroke="#2ea3dc" stroke-width="1.9" stroke-linecap="round" stroke-linejoin="round" style="overflow:visible"><circle cx="20" cy="20" r="18.3"/><circle cx="15.6" cy="15.4" r="2.7"/><circle cx="24.6" cy="24.6" r="2.7"/><path d="M25.6,12.8L14.8,27.4"/></svg></div><div class="ico" style="left:1659.0px;top:1066.9px"><svg width="24" height="24" viewBox="0 0 40 40" fill="none" stroke="#2ea3dc" stroke-width="1.9" stroke-linecap="round" stroke-linejoin="round" style="overflow:visible"><path d="M36,29.2L37.6,37.6L29.2,36A18.3,18.3 0 1 1 36,29.2Z"/><path d="M20,29.6C12.5,24.6 9.6,20.6 9.6,17C9.6,13.6 12,11.8 14.6,11.8C17,11.8 19,13.2 20,15.4C21,13.2 23,11.8 25.4,11.8C28,11.8 30.4,13.6 30.4,17C30.4,20.6 27.5,24.6 20,29.6Z"/></svg></div><div class="ico" style="left:1710.7px;top:1066.9px"><svg width="24" height="24" viewBox="0 0 40 40" fill="none" stroke="#2ea3dc" stroke-width="1.9" stroke-linecap="round" stroke-linejoin="round" style="overflow:visible"><path d="M3.6,5.2C3.6,4.2 4.4,3.8 5.3,4.1L14.5,6.9L25.5,3.9L35.2,6.6C36,6.8 36.4,7.4 36.4,8.2V34.8C36.4,35.8 35.6,36.2 34.7,35.9L25.5,33.1L14.5,36.1L4.8,33.4C4,33.2 3.6,32.6 3.6,31.8Z"/><path d="M20.5,12.2C14.5,11.2 9.5,14.6 10.2,18.6C11,22.6 19.5,20.5 18.6,25C18.2,27 16,28.2 13.8,28.4" stroke-dasharray="2.2 2.2" stroke-width="1.4"/><path d="M24.6,12.6L30.6,18.6M30.6,12.6L24.6,18.6"/></svg></div><div class="ico" style="left:1759.0px;top:1066.9px"><svg width="24" height="24" viewBox="0 0 40 40" fill="none" stroke="#2ea3dc" stroke-width="1.9" stroke-linecap="round" stroke-linejoin="round" style="overflow:visible"><g transform="translate(3.6,0.2) rotate(-43.5 20 20)"><rect x="-1.15" y="13" width="20.4" height="14" rx="7"/><rect x="20.75" y="13" width="20.4" height="14" rx="7"/><path d="M9.800,20H30.200"/></g></svg></div><div class="ico" style="left:1809.0px;top:1066.9px"><svg width="24" height="24" viewBox="0 0 40 40" fill="none" stroke="#2ea3dc" stroke-width="1.9" stroke-linecap="round" stroke-linejoin="round" style="overflow:visible"><path d="M26.2,3.6C21.6,3.2 17.6,6.4 17.2,10.8C17,12.6 17.4,14.2 18.2,15.6L4.6,27.6C2.6,29.4 2.6,32.4 4.4,34.4C6.2,36.4 9.2,36.6 11.2,34.8L24.8,22.8C26.2,23.4 27.8,23.6 29.4,23.2C33.6,22.2 36.4,18 35.6,13.6L29.2,19.2L23.2,12.6L29.6,7.2Z" transform="translate(0.5,0)"/></svg></div><div class="ico" style="left:1855.0px;top:1066.9px"><svg width="24" height="24" viewBox="0 0 40 40" fill="none" stroke="#2ea3dc" stroke-width="1.9" stroke-linecap="round" stroke-linejoin="round" style="overflow:visible"><rect x="3.6" y="8.4" width="32.6" height="23" rx="0.8"/><path d="M3.8,13.8L20,20.8L36,13.8"/></svg></div><div class="ico" style="left:1905.0px;top:1066.9px"><svg width="24" height="24" viewBox="0 0 40 40" fill="none" stroke="#2ea3dc" stroke-width="1.9" stroke-linecap="round" stroke-linejoin="round" style="overflow:visible"><path d="M8.8,21.6V16.2C8.8,9.800 13.700,4.600 20,4.600C26.300,4.600 31.200,9.800 31.200,16.200V21.600"/><path d="M12.8,21.6V30.4H9.2C6.6,30.4 4.6,28.4 4.6,26C4.6,23.6 6.6,21.6 9.2,21.6Z"/><path d="M27.2,21.6V30.4H30.8C33.4,30.4 35.4,28.4 35.4,26C35.4,23.6 33.4,21.6 30.8,21.6Z"/><path d="M8.8,30.4C9.4,33.6 11.8,35.6 15,35.6H21.4"/></svg></div><div class="b" style="left:1873.6px;top:1079.6px;width:7.2px;height:7.2px;background:#f40000;border-radius:50%;"></div>
</body></html>
